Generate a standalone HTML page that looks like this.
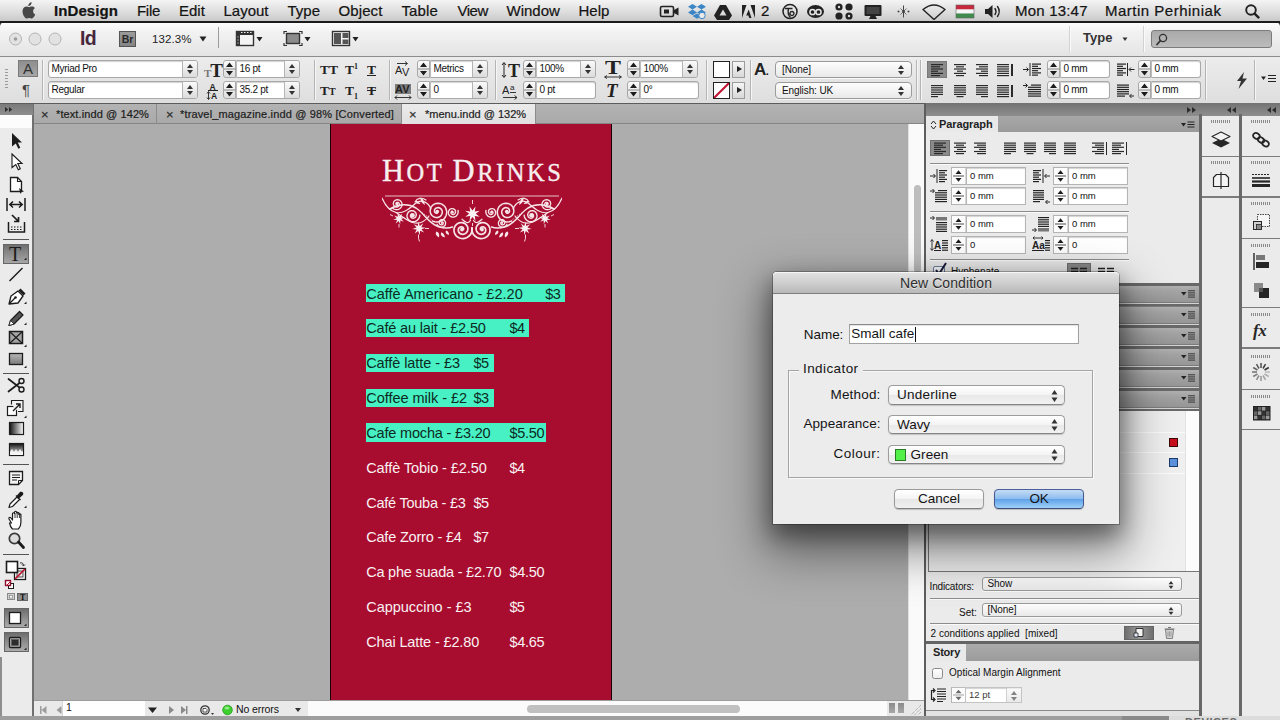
<!DOCTYPE html>
<html>
<head>
<meta charset="utf-8">
<title>InDesign</title>
<style>
*{box-sizing:border-box;margin:0;padding:0}
html,body{width:1280px;height:720px;overflow:hidden;background:#adadad;font-family:"Liberation Sans",sans-serif;color:#111}
.abs{position:absolute}
#root{position:absolute;left:0;top:0;width:1280px;height:720px;overflow:hidden}
/* ---------- menu bar ---------- */
#menubar{left:0;top:0;width:1280px;height:22px;background:linear-gradient(#f4f4f4,#dcdcdc 60%,#c9c9c9);border-bottom:2px solid #1c1c1c;height:22.500px;z-index:2}
#menubar span{position:absolute;top:2px;font-size:15px;line-height:18px;color:#141414;white-space:nowrap;-webkit-text-stroke:.22px #141414}
/* ---------- app bar ---------- */
#appbar{left:0;top:22px;width:1280px;height:35px;background:linear-gradient(#fdfdfd,#f2f2f2 30%,#e4e4e4);border-bottom:1px solid #8c8c8c;border-radius:5px 5px 0 0;box-shadow:0 -3px 0 3px #3c3c3c}
/* ---------- control panel ---------- */
#control{left:0;top:57px;width:1280px;height:47px;background:linear-gradient(#ececec,#dedede);border-bottom:1px solid #5c5c5c}
.fld{position:absolute;height:18px;background:#fff;border:1px solid #a8a8a8;border-radius:3px;font-size:10px;line-height:16.500px;padding-left:2.500px;letter-spacing:-.3px;color:#111;box-shadow:inset 0 1px 1px rgba(0,0,0,.18);white-space:nowrap;overflow:hidden}

.fld{position:absolute}
.fld.sq{border-radius:0 3px 3px 0;border-left-color:#bcbcbc}
.fld.pf{font-size:9.500px;letter-spacing:0;border-color:#b4b4b4;padding-left:3px;border-radius:0 !important}
.fld .dd{position:absolute;right:0;top:0;width:15px;height:16px;background:linear-gradient(#fafafa,#dcdcdc);border-left:1px solid #b4b4b4}
.fld .dd:before,.pop .ud:before{content:"";position:absolute;left:4px;top:3px;border:3px solid transparent;border-top:0;border-bottom:4px solid #333}
.fld .dd:after,.pop .ud:after{content:"";position:absolute;left:4px;top:9px;border:3px solid transparent;border-bottom:0;border-top:4px solid #333}
.vsep{top:3px;width:1px;height:40px;background:#b4b4b4;box-shadow:1px 0 0 #f6f6f6}
.tt{font-family:"Liberation Serif",serif;font-weight:bold;font-size:13.500px;line-height:18px;color:#222;white-space:nowrap}
.tt sup,.tt sub{font-size:8px;line-height:0}
.arrowbtn{width:13px;height:17px;background:linear-gradient(#f6f6f6,#d8d8d8);border:1px solid #9c9c9c}
.arrowbtn:before{content:"";position:absolute;left:4px;top:4px;border:3.500px solid transparent;border-right:0;border-left:5px solid #222}
.pop{position:absolute;height:17px;background:linear-gradient(#fdfdfd,#e9e9e9);border:1px solid #9a9a9a;border-radius:4px;font-size:10px;line-height:15px;padding-left:6px;letter-spacing:-.1px;color:#111;box-shadow:0 1px 0 rgba(255,255,255,.7);white-space:nowrap}
.pop .ud{position:absolute;right:3px;top:0;width:14px;height:16px}
/* ---------- tab bar ---------- */
#tabbar{left:33px;top:104px;width:891px;height:20px;background:linear-gradient(#b3b3b3,#a9a9a9);border-bottom:1px solid #858585}
.tab{position:absolute;top:0;height:20px;font-size:11px;line-height:21px;color:#1c1c1c;-webkit-text-stroke:.2px #1c1c1c;white-space:nowrap;border-right:1px solid #8c8c8c}
.tab span,.tab .x{position:absolute;top:0}
.tab .x{font-weight:normal;font-size:13px;color:#333}
.tab.act{background:linear-gradient(#ebebeb,#e0e0e0);height:20px}
/* ---------- canvas ---------- */
#canvas{left:33px;top:124px;width:875px;height:576px;background:#adadad}
#page{left:330px;top:123px;width:282px;height:578px;background:#a80c2f;border-left:1px solid #1a0006;border-right:1px solid #1a0006}
.row{position:absolute;font-size:14.5px;line-height:18px;color:#f9f1f2;white-space:pre}
.hl{position:absolute;height:18.300px;background:#48f1c4}
.row.dk{color:#0d2a22}
#vscroll{left:908px;top:124px;width:16px;height:576px;background:#fafafa;border-left:1px solid #e0e0e0}
#status{left:33px;top:700px;width:891px;height:16px;background:#e9e9e9;border-top:1px solid #9c9c9c}
/* ---------- tools ---------- */
#tools{left:0;top:104px;width:34px;height:616px;background:#ebebeb;border-right:2px solid #707070}
/* ---------- right panels ---------- */
#rightdock{left:924px;top:103px;width:356px;height:617px;background:#7f7f7f}
#dialog{left:773px;top:272px;width:346px;height:252px;background:#ececec;border-radius:4px 4px 0 0;box-shadow:0 22px 48px 8px rgba(0,0,0,.42),0 10px 22px 2px rgba(0,0,0,.38),0 0 0 1px rgba(0,0,0,.26)}
.dl{font-size:13.500px;line-height:16px;color:#141414;white-space:nowrap}
.dpop{position:absolute;width:177px;height:19.500px;border:1px solid #9c9c9c;border-bottom-color:#868686;border-radius:4.500px;background:linear-gradient(#ffffff,#f4f4f4 50%,#e8e8e8 51%,#f2f2f2);font-size:13.500px;line-height:17.500px;color:#141414;box-shadow:0 1px 1px rgba(0,0,0,.18)}
.dbtn{position:absolute;width:90px;height:20px;margin-top:-.5px;border:1px solid #9a9a9a;border-bottom-color:#808080;border-radius:4.500px;background:linear-gradient(#ffffff,#f4f4f4 50%,#e6e6e6 51%,#f0f0f0);font-size:13.500px;line-height:17.500px;text-align:center;color:#141414;box-shadow:0 1px 1px rgba(0,0,0,.2)}
.dbtn.ok{border-color:#4a5f9c #46598f #3a4b7c;background:linear-gradient(#c5dcf5,#8ebdf0 48%,#5fa2ea 52%,#9fd0f7)}
</style>
</head>
<body>
<div id="root">
<div id="canvas" class="abs"></div>
<div id="page" class="abs">
<div class="abs" style="left:51px;top:29.7px;width:190px;height:36px;font-family:'Liberation Serif',serif;color:#f7eef0;font-size:24.500px;line-height:36px;letter-spacing:2.550px;white-space:nowrap;-webkit-text-stroke:.35px #f7eef0"><span style="font-size:30.500px">H</span>OT <span style="font-size:30.500px">D</span>RINKS</div>
<svg class="abs" style="left:50.5px;top:71px" width="180" height="50" viewBox="-90 -2 180 50">
<path d="M-87 0H87" stroke="#e8bfc8" stroke-width="1.100"/>
<g><path d="M-0.2 31.9 L-0.1 34.2 L0.4 36.4 L1.4 38.4 L2.9 40.0 L4.6 41.3 L6.5 42.2 L8.6 42.6 L10.6 42.5 L12.6 42.0 L14.3 41.1 L15.8 39.8 L16.9 38.3 L17.7 36.6 L18.0 34.8 L18.0 33.0 L17.5 31.3 L16.7 29.7 L15.5 28.4 L14.2 27.5 L12.7 26.8 L11.1 26.5 L9.5 26.6 L8.1 27.1 L6.8 27.8 L5.7 28.8 L4.9 29.9 L4.3 31.2 L4.1 32.6 L4.2 33.9 L4.6 35.1 L5.2 36.2 L6.1 37.1 L7.1 37.8 L8.1 38.2 L9.2 38.3 L10.3 38.2 L11.3 37.9 L12.2 37.3 L12.9 36.6 L13.4 35.8 L13.6 35.0 L13.7 34.1 L13.6 33.3 L13.3 32.5 L12.9 31.9 L12.3 31.4 L11.7 31.0 L11.1 30.9 L10.4 30.8 L9.8 31.0 L9.3 31.2 L8.9 31.6 L8.6 32.0 L8.4 32.4 L8.4 32.8 L8.4 33.2" fill="none" stroke="#f6e6e9" stroke-width="1.7" stroke-linecap="round"/><path d="M39.6 25.1 L37.2 25.8 L34.7 26.0 L32.3 25.5 L30.1 24.5 L28.2 23.1 L26.8 21.3 L25.8 19.2 L25.3 17.0 L25.4 14.8 L26.0 12.7 L27.0 10.8 L28.5 9.3 L30.2 8.1 L32.1 7.4 L34.0 7.2 L36.0 7.5 L37.8 8.1 L39.3 9.2 L40.5 10.5 L41.4 12.1 L41.8 13.8 L41.8 15.5 L41.5 17.1 L40.8 18.6 L39.8 19.8 L38.5 20.7 L37.1 21.3 L35.7 21.6 L34.2 21.5 L32.9 21.0 L31.7 20.3 L30.8 19.4 L30.2 18.3 L29.8 17.1 L29.7 15.9 L29.9 14.7 L30.4 13.7 L31.1 12.9 L31.9 12.2 L32.8 11.8 L33.8 11.6 L34.7 11.7 L35.6 11.9 L36.3 12.4 L36.9 13.0 L37.3 13.6 L37.5 14.4 L37.5 15.1 L37.4 15.7 L37.1 16.3 L36.7 16.7 L36.2 17.0 L35.7 17.2 L35.3 17.2 L34.8 17.2 L34.5 17.0" fill="none" stroke="#f6e6e9" stroke-width="1.5" stroke-linecap="round"/><path d="M14.0 14.4 L13.8 15.6 L13.9 16.7 L14.2 17.8 L14.7 18.7 L15.4 19.6 L16.2 20.3 L17.1 20.7 L18.1 21.0 L19.1 21.1 L20.1 21.0 L21.0 20.7 L21.8 20.2 L22.5 19.6 L23.0 18.8 L23.4 18.0 L23.6 17.2 L23.6 16.3 L23.5 15.5 L23.2 14.7 L22.7 14.0 L22.2 13.4 L21.5 13.0 L20.8 12.7 L20.1 12.6 L19.3 12.6 L18.6 12.8 L18.0 13.1 L17.5 13.5 L17.0 14.0 L16.7 14.6 L16.5 15.2 L16.5 15.8 L16.5 16.4 L16.7 16.9 L17.0 17.4 L17.4 17.8 L17.8 18.1 L18.2 18.4 L18.7 18.5 L19.2 18.5 L19.6 18.4 L20.0 18.2 L20.4 18.0 L20.7 17.7 L20.9 17.3 L21.0 17.0 L21.0 16.6 L21.0 16.3 L20.9 16.0 L20.7 15.7 L20.5 15.5 L20.3 15.3 L20.1 15.2 L19.8 15.2 L19.6 15.2 L19.4 15.3" fill="none" stroke="#f6e6e9" stroke-width="1.35" stroke-linecap="round"/><path d="M34.9 28.3 L34.4 29.1 L33.8 29.8 L33.2 30.4 L32.4 30.9 L31.6 31.1 L30.7 31.2 L29.9 31.2 L29.1 31.0 L28.3 30.6 L27.7 30.1 L27.1 29.5 L26.7 28.9 L26.5 28.1 L26.4 27.4 L26.4 26.7 L26.6 26.0 L26.9 25.3 L27.3 24.8 L27.7 24.3 L28.3 23.9 L28.9 23.7 L29.5 23.6 L30.2 23.6 L30.8 23.7 L31.3 23.9 L31.8 24.3 L32.2 24.7 L32.5 25.1 L32.7 25.6 L32.8 26.1 L32.8 26.7 L32.7 27.1 L32.6 27.6 L32.3 28.0 L32.0 28.3 L31.6 28.6 L31.2 28.7 L30.8 28.8 L30.4 28.8 L30.0 28.8 L29.7 28.6 L29.4 28.4 L29.1 28.2 L28.9 27.9 L28.8 27.6 L28.8 27.3 L28.8 27.0 L28.8 26.7 L28.9 26.5 L29.1 26.3 L29.2 26.1 L29.4 26.0 L29.6 25.9 L29.8 25.9 L30.0 25.9 L30.2 26.0" fill="none" stroke="#f6e6e9" stroke-width="1.3" stroke-linecap="round"/><path d="M52.2 19.3 L52.4 20.7 L52.9 21.9 L53.6 23.1 L54.5 24.0 L55.6 24.8 L56.8 25.4 L58.0 25.7 L59.2 25.7 L60.4 25.6 L61.6 25.2 L62.6 24.6 L63.4 23.8 L64.1 22.9 L64.6 21.9 L64.9 20.9 L65.0 19.8 L64.9 18.8 L64.6 17.8 L64.1 16.9 L63.5 16.1 L62.8 15.5 L61.9 15.0 L61.0 14.8 L60.1 14.7 L59.2 14.7 L58.4 15.0 L57.7 15.4 L57.0 15.9 L56.5 16.5 L56.1 17.2 L55.8 17.9 L55.7 18.6 L55.8 19.3 L56.0 20.0 L56.3 20.6 L56.7 21.2 L57.2 21.6 L57.7 21.9 L58.3 22.1 L58.8 22.2 L59.4 22.1 L59.9 22.0 L60.4 21.8 L60.8 21.5 L61.1 21.1 L61.3 20.7 L61.5 20.3 L61.5 19.9 L61.5 19.5 L61.3 19.1 L61.2 18.8 L60.9 18.5 L60.7 18.3 L60.4 18.2 L60.1 18.2 L59.9 18.2" fill="none" stroke="#f6e6e9" stroke-width="1.4" stroke-linecap="round"/><path d="M79.2 12.2 L78.2 13.0 L77.0 13.4 L75.8 13.7 L74.6 13.6 L73.5 13.3 L72.4 12.8 L71.5 12.1 L70.8 11.2 L70.3 10.2 L70.0 9.1 L70.0 8.1 L70.2 7.0 L70.6 6.1 L71.2 5.2 L71.9 4.5 L72.8 4.0 L73.7 3.8 L74.6 3.7 L75.5 3.8 L76.4 4.1 L77.1 4.5 L77.8 5.1 L78.2 5.8 L78.5 6.6 L78.7 7.4 L78.6 8.2 L78.4 8.9 L78.1 9.6 L77.6 10.1 L77.0 10.6 L76.4 10.8 L75.8 11.0 L75.1 11.0 L74.5 10.9 L73.9 10.6 L73.5 10.2 L73.1 9.8 L72.8 9.3 L72.7 8.8 L72.7 8.3 L72.7 7.8 L72.9 7.3 L73.2 7.0 L73.5 6.7 L73.9 6.4 L74.3 6.3 L74.7 6.3 L75.0 6.4 L75.4 6.5 L75.6 6.7 L75.8 6.9 L76.0 7.2 L76.0 7.5 L76.0 7.7 L76.0 7.9 L75.9 8.1" fill="none" stroke="#f6e6e9" stroke-width="1.3" stroke-linecap="round"/><path d="M90 2 C87 9 82 15 76 16.500 C68 18 62 12 56 7 C50 3 44 6 41 13" fill="none" stroke="#f6e6e9" stroke-width="1.2" stroke-linecap="round"/><path d="M82 13 C74 8 64 7 56 12 C47 18 44 27 34 30.500 C28 32.500 22 32 19.500 31" fill="none" stroke="#f6e6e9" stroke-width="1.5" stroke-linecap="round"/><path d="M76 16.500 C70 20 64 26 57 27 C50 28 46 24 43 20" fill="none" stroke="#f6e6e9" stroke-width="1.2" stroke-linecap="round"/><path d="M1.500 24.500 C4 29 8 25 10 23.200" fill="none" stroke="#f6e6e9" stroke-width="1.2" stroke-linecap="round"/><path d="M46 4 C50 1 55 2 57 6" fill="none" stroke="#f6e6e9" stroke-width="1.1" stroke-linecap="round"/><path d="M47 9 q1.500-7 4.500-7.500 q.5 5-4.500 7.500z M51.500 8 q3-4 5.500-3 q-1 3.500-5.500 3z M27 41.500 q1-5 4-5 q1 4-4 5z M33 41.500 q-1-5 2.500-6 q2.500 3-2.500 6z M23 39 q0-4 3-4.500 q1.500 3-3 4.500z" fill="#f6e6e9"/><path d="M78.7 23.8 L74.9 23.9 L76.2 27.4 L73.4 24.9 L71.8 28.3 L71.7 24.5 L68.2 25.8 L70.7 23.0 L67.3 21.4 L71.1 21.3 L69.8 17.8 L72.6 20.3 L74.2 16.9 L74.3 20.7 L77.8 19.4 L75.3 22.2z" fill="#f9eef0"/><path d="M59.6 33.1 L55.3 33.6 L57.2 37.5 L53.8 34.9 L52.3 39.0 L51.8 34.7 L47.9 36.6 L50.5 33.2 L46.4 31.7 L50.7 31.2 L48.8 27.3 L52.2 29.9 L53.7 25.8 L54.2 30.1 L58.1 28.2 L55.5 31.6z" fill="#f9eef0"/><path d="M53.500 38.500q.5 4-1 7M73 28v3.500M47 32.500h-4M79 20l3-1.500" stroke="#f6e6e9" stroke-width=".9" fill="none"/><circle cx="34.700" cy="15.500" r="1.800" fill="#f6e6e9"/><circle cx="19.400" cy="16.200" r="1.200" fill="#f6e6e9"/><circle cx="10" cy="33.500" r="1.900" fill="#f6e6e9"/><circle cx="59.500" cy="19.300" r="2.300" fill="#f6e6e9"/><circle cx="75" cy="8" r="1.300" fill="#f6e6e9"/><circle cx="30.200" cy="26.800" r="1.100" fill="#f6e6e9"/><path d="M40 24l12-9" stroke="#f6e6e9" stroke-width="1" stroke-dasharray=".1 2.200" stroke-linecap="round"/></g><g transform="scale(-1,1)"><path d="M-0.2 31.9 L-0.1 34.2 L0.4 36.4 L1.4 38.4 L2.9 40.0 L4.6 41.3 L6.5 42.2 L8.6 42.6 L10.6 42.5 L12.6 42.0 L14.3 41.1 L15.8 39.8 L16.9 38.3 L17.7 36.6 L18.0 34.8 L18.0 33.0 L17.5 31.3 L16.7 29.7 L15.5 28.4 L14.2 27.5 L12.7 26.8 L11.1 26.5 L9.5 26.6 L8.1 27.1 L6.8 27.8 L5.7 28.8 L4.9 29.9 L4.3 31.2 L4.1 32.6 L4.2 33.9 L4.6 35.1 L5.2 36.2 L6.1 37.1 L7.1 37.8 L8.1 38.2 L9.2 38.3 L10.3 38.2 L11.3 37.9 L12.2 37.3 L12.9 36.6 L13.4 35.8 L13.6 35.0 L13.7 34.1 L13.6 33.3 L13.3 32.5 L12.9 31.9 L12.3 31.4 L11.7 31.0 L11.1 30.9 L10.4 30.8 L9.8 31.0 L9.3 31.2 L8.9 31.6 L8.6 32.0 L8.4 32.4 L8.4 32.8 L8.4 33.2" fill="none" stroke="#f6e6e9" stroke-width="1.7" stroke-linecap="round"/><path d="M39.6 25.1 L37.2 25.8 L34.7 26.0 L32.3 25.5 L30.1 24.5 L28.2 23.1 L26.8 21.3 L25.8 19.2 L25.3 17.0 L25.4 14.8 L26.0 12.7 L27.0 10.8 L28.5 9.3 L30.2 8.1 L32.1 7.4 L34.0 7.2 L36.0 7.5 L37.8 8.1 L39.3 9.2 L40.5 10.5 L41.4 12.1 L41.8 13.8 L41.8 15.5 L41.5 17.1 L40.8 18.6 L39.8 19.8 L38.5 20.7 L37.1 21.3 L35.7 21.6 L34.2 21.5 L32.9 21.0 L31.7 20.3 L30.8 19.4 L30.2 18.3 L29.8 17.1 L29.7 15.9 L29.9 14.7 L30.4 13.7 L31.1 12.9 L31.9 12.2 L32.8 11.8 L33.8 11.6 L34.7 11.7 L35.6 11.9 L36.3 12.4 L36.9 13.0 L37.3 13.6 L37.5 14.4 L37.5 15.1 L37.4 15.7 L37.1 16.3 L36.7 16.7 L36.2 17.0 L35.7 17.2 L35.3 17.2 L34.8 17.2 L34.5 17.0" fill="none" stroke="#f6e6e9" stroke-width="1.5" stroke-linecap="round"/><path d="M14.0 14.4 L13.8 15.6 L13.9 16.7 L14.2 17.8 L14.7 18.7 L15.4 19.6 L16.2 20.3 L17.1 20.7 L18.1 21.0 L19.1 21.1 L20.1 21.0 L21.0 20.7 L21.8 20.2 L22.5 19.6 L23.0 18.8 L23.4 18.0 L23.6 17.2 L23.6 16.3 L23.5 15.5 L23.2 14.7 L22.7 14.0 L22.2 13.4 L21.5 13.0 L20.8 12.7 L20.1 12.6 L19.3 12.6 L18.6 12.8 L18.0 13.1 L17.5 13.5 L17.0 14.0 L16.7 14.6 L16.5 15.2 L16.5 15.8 L16.5 16.4 L16.7 16.9 L17.0 17.4 L17.4 17.8 L17.8 18.1 L18.2 18.4 L18.7 18.5 L19.2 18.5 L19.6 18.4 L20.0 18.2 L20.4 18.0 L20.7 17.7 L20.9 17.3 L21.0 17.0 L21.0 16.6 L21.0 16.3 L20.9 16.0 L20.7 15.7 L20.5 15.5 L20.3 15.3 L20.1 15.2 L19.8 15.2 L19.6 15.2 L19.4 15.3" fill="none" stroke="#f6e6e9" stroke-width="1.35" stroke-linecap="round"/><path d="M34.9 28.3 L34.4 29.1 L33.8 29.8 L33.2 30.4 L32.4 30.9 L31.6 31.1 L30.7 31.2 L29.9 31.2 L29.1 31.0 L28.3 30.6 L27.7 30.1 L27.1 29.5 L26.7 28.9 L26.5 28.1 L26.4 27.4 L26.4 26.7 L26.6 26.0 L26.9 25.3 L27.3 24.8 L27.7 24.3 L28.3 23.9 L28.9 23.7 L29.5 23.6 L30.2 23.6 L30.8 23.7 L31.3 23.9 L31.8 24.3 L32.2 24.7 L32.5 25.1 L32.7 25.6 L32.8 26.1 L32.8 26.7 L32.7 27.1 L32.6 27.6 L32.3 28.0 L32.0 28.3 L31.6 28.6 L31.2 28.7 L30.8 28.8 L30.4 28.8 L30.0 28.8 L29.7 28.6 L29.4 28.4 L29.1 28.2 L28.9 27.9 L28.8 27.6 L28.8 27.3 L28.8 27.0 L28.8 26.7 L28.9 26.5 L29.1 26.3 L29.2 26.1 L29.4 26.0 L29.6 25.9 L29.8 25.9 L30.0 25.9 L30.2 26.0" fill="none" stroke="#f6e6e9" stroke-width="1.3" stroke-linecap="round"/><path d="M52.2 19.3 L52.4 20.7 L52.9 21.9 L53.6 23.1 L54.5 24.0 L55.6 24.8 L56.8 25.4 L58.0 25.7 L59.2 25.7 L60.4 25.6 L61.6 25.2 L62.6 24.6 L63.4 23.8 L64.1 22.9 L64.6 21.9 L64.9 20.9 L65.0 19.8 L64.9 18.8 L64.6 17.8 L64.1 16.9 L63.5 16.1 L62.8 15.5 L61.9 15.0 L61.0 14.8 L60.1 14.7 L59.2 14.7 L58.4 15.0 L57.7 15.4 L57.0 15.9 L56.5 16.5 L56.1 17.2 L55.8 17.9 L55.7 18.6 L55.8 19.3 L56.0 20.0 L56.3 20.6 L56.7 21.2 L57.2 21.6 L57.7 21.9 L58.3 22.1 L58.8 22.2 L59.4 22.1 L59.9 22.0 L60.4 21.8 L60.8 21.5 L61.1 21.1 L61.3 20.7 L61.5 20.3 L61.5 19.9 L61.5 19.5 L61.3 19.1 L61.2 18.8 L60.9 18.5 L60.7 18.3 L60.4 18.2 L60.1 18.2 L59.9 18.2" fill="none" stroke="#f6e6e9" stroke-width="1.4" stroke-linecap="round"/><path d="M79.2 12.2 L78.2 13.0 L77.0 13.4 L75.8 13.7 L74.6 13.6 L73.5 13.3 L72.4 12.8 L71.5 12.1 L70.8 11.2 L70.3 10.2 L70.0 9.1 L70.0 8.1 L70.2 7.0 L70.6 6.1 L71.2 5.2 L71.9 4.5 L72.8 4.0 L73.7 3.8 L74.6 3.7 L75.5 3.8 L76.4 4.1 L77.1 4.5 L77.8 5.1 L78.2 5.8 L78.5 6.6 L78.7 7.4 L78.6 8.2 L78.4 8.9 L78.1 9.6 L77.6 10.1 L77.0 10.6 L76.4 10.8 L75.8 11.0 L75.1 11.0 L74.5 10.9 L73.9 10.6 L73.5 10.2 L73.1 9.8 L72.8 9.3 L72.7 8.8 L72.7 8.3 L72.7 7.8 L72.9 7.3 L73.2 7.0 L73.5 6.7 L73.9 6.4 L74.3 6.3 L74.7 6.3 L75.0 6.4 L75.4 6.5 L75.6 6.7 L75.8 6.9 L76.0 7.2 L76.0 7.5 L76.0 7.7 L76.0 7.9 L75.9 8.1" fill="none" stroke="#f6e6e9" stroke-width="1.3" stroke-linecap="round"/><path d="M90 2 C87 9 82 15 76 16.500 C68 18 62 12 56 7 C50 3 44 6 41 13" fill="none" stroke="#f6e6e9" stroke-width="1.2" stroke-linecap="round"/><path d="M82 13 C74 8 64 7 56 12 C47 18 44 27 34 30.500 C28 32.500 22 32 19.500 31" fill="none" stroke="#f6e6e9" stroke-width="1.5" stroke-linecap="round"/><path d="M76 16.500 C70 20 64 26 57 27 C50 28 46 24 43 20" fill="none" stroke="#f6e6e9" stroke-width="1.2" stroke-linecap="round"/><path d="M1.500 24.500 C4 29 8 25 10 23.200" fill="none" stroke="#f6e6e9" stroke-width="1.2" stroke-linecap="round"/><path d="M46 4 C50 1 55 2 57 6" fill="none" stroke="#f6e6e9" stroke-width="1.1" stroke-linecap="round"/><path d="M47 9 q1.500-7 4.500-7.500 q.5 5-4.500 7.500z M51.500 8 q3-4 5.500-3 q-1 3.500-5.500 3z M27 41.500 q1-5 4-5 q1 4-4 5z M33 41.500 q-1-5 2.500-6 q2.500 3-2.500 6z M23 39 q0-4 3-4.500 q1.500 3-3 4.500z" fill="#f6e6e9"/><path d="M78.7 23.8 L74.9 23.9 L76.2 27.4 L73.4 24.9 L71.8 28.3 L71.7 24.5 L68.2 25.8 L70.7 23.0 L67.3 21.4 L71.1 21.3 L69.8 17.8 L72.6 20.3 L74.2 16.9 L74.3 20.7 L77.8 19.4 L75.3 22.2z" fill="#f9eef0"/><path d="M59.6 33.1 L55.3 33.6 L57.2 37.5 L53.8 34.9 L52.3 39.0 L51.8 34.7 L47.9 36.6 L50.5 33.2 L46.4 31.7 L50.7 31.2 L48.8 27.3 L52.2 29.9 L53.7 25.8 L54.2 30.1 L58.1 28.2 L55.5 31.6z" fill="#f9eef0"/><path d="M53.500 38.500q.5 4-1 7M73 28v3.500M47 32.500h-4M79 20l3-1.500" stroke="#f6e6e9" stroke-width=".9" fill="none"/><circle cx="34.700" cy="15.500" r="1.800" fill="#f6e6e9"/><circle cx="19.400" cy="16.200" r="1.200" fill="#f6e6e9"/><circle cx="10" cy="33.500" r="1.900" fill="#f6e6e9"/><circle cx="59.500" cy="19.300" r="2.300" fill="#f6e6e9"/><circle cx="75" cy="8" r="1.300" fill="#f6e6e9"/><circle cx="30.200" cy="26.800" r="1.100" fill="#f6e6e9"/><path d="M40 24l12-9" stroke="#f6e6e9" stroke-width="1" stroke-dasharray=".1 2.200" stroke-linecap="round"/></g>
<path d="M7.7 20.8 L2.8 20.1 L3.5 25.0 L0.5 21.1 L-2.5 25.0 L-1.8 20.1 L-6.7 20.8 L-2.8 17.8 L-6.7 14.8 L-1.8 15.5 L-2.5 10.6 L0.5 14.5 L3.5 10.6 L2.8 15.5 L7.7 14.8 L3.8 17.8z" fill="#fbf2f4"/><path d="M.5 8v-4M.5 27v3" stroke="#f6e6e9" stroke-width=".9"/>
</svg>
<div class="hl" style="top:161.10000000000002px;left:34.7px;width:199.3px"></div>
<span class="row dk" style="top:161.6px;left:35.2px;letter-spacing:0.02px">Caffè Americano - £2.20</span><span class="row dk" style="top:161.6px;left:214.3px;letter-spacing:-0.56px">$3</span>
<div class="hl" style="top:195.89999999999998px;left:34.7px;width:163.6px"></div>
<span class="row dk" style="top:196.4px;left:35.2px;letter-spacing:-0.15px">Café au lait - £2.50</span><span class="row dk" style="top:196.4px;left:178.4px;letter-spacing:-0.56px">$4</span>
<div class="hl" style="top:230.8px;left:34.7px;width:128.1px"></div>
<span class="row dk" style="top:231.3px;left:35.2px;letter-spacing:-0.07px">Caffè latte - £3</span><span class="row dk" style="top:231.3px;left:142.6px;letter-spacing:-0.76px">$5</span>
<div class="hl" style="top:265.6px;left:34.7px;width:128.1px"></div>
<span class="row dk" style="top:266.1px;left:35.2px;letter-spacing:-0.02px">Coffee milk - £2</span><span class="row dk" style="top:266.1px;left:142.6px;letter-spacing:-0.76px">$3</span>
<div class="hl" style="top:300.4px;left:34.7px;width:179.9px"></div>
<span class="row dk" style="top:300.9px;left:35.2px;letter-spacing:-0.17px">Cafe mocha - £3.20</span><span class="row dk" style="top:300.9px;left:178.4px;letter-spacing:-0.3px">$5.50</span>
<span class="row" style="top:335.7px;left:35.2px;letter-spacing:-0.08px">Caffè Tobio - £2.50</span><span class="row" style="top:335.7px;left:178.4px;letter-spacing:-0.56px">$4</span>
<span class="row" style="top:370.6px;left:35.2px;letter-spacing:-0.23px">Café Touba - £3</span><span class="row" style="top:370.6px;left:142.6px;letter-spacing:-0.76px">$5</span>
<span class="row" style="top:405.4px;left:35.2px;letter-spacing:-0.19px">Cafe Zorro - £4</span><span class="row" style="top:405.4px;left:142.6px;letter-spacing:-0.76px">$7</span>
<span class="row" style="top:440.2px;left:35.2px;letter-spacing:-0.22px">Ca phe suada - £2.70</span><span class="row" style="top:440.2px;left:178.4px;letter-spacing:-0.3px">$4.50</span>
<span class="row" style="top:475.1px;left:35.2px;letter-spacing:-0.01px">Cappuccino - £3</span><span class="row" style="top:475.1px;left:178.4px;letter-spacing:-0.76px">$5</span>
<span class="row" style="top:509.9px;left:35.2px;letter-spacing:-0.13px">Chai Latte - £2.80</span><span class="row" style="top:509.9px;left:178.4px;letter-spacing:-0.3px">$4.65</span>
</div>
<div id="vscroll" class="abs"><div class="abs" style="left:5px;top:61px;width:7px;height:88px;border-radius:4px;background:#bdbdbd"></div></div>
<div id="status" class="abs">
<svg class="abs" style="left:4px;top:3px" width="270" height="12" viewBox="0 0 270 12">
<g fill="#9c9c9c"><path d="M3 2h1.500v8H3zM9.500 2v8L4.500 6z"/><path d="M24.500 2v8L19.500 6z"/></g>
<path d="M111 3.500h9L115.500 9z" fill="#222"/>
<g fill="#8a8a8a"><path d="M132 2v8l5-4z"/><path d="M144 2v8l5-4zM149 2h1.500v8H149z"/></g>
<circle cx="168" cy="6" r="4.200" fill="#e8e8e8" stroke="#333" stroke-width="1.300"/><path d="M166 4.500h3l1 1v2.500h-4z" fill="#fff" stroke="#333" stroke-width=".8"/><path d="M174 9h3l-1.500 2z" fill="#333"/>
<circle cx="190.500" cy="6" r="4.800" fill="#3ccf2e" stroke="#2a9a20" stroke-width=".8"/><ellipse cx="190" cy="4" rx="2.500" ry="1.500" fill="#a6f09c" opacity=".8"/>
<path d="M258 4h6l-3 4z" fill="#333"/>
</svg>
<div class="abs" style="left:29px;top:0;width:83px;height:15px;background:#fff;border:0;border-left:1px solid #d8d8d8;line-height:15.500px;font-size:10.500px;line-height:12px;padding-left:3px">1</div>
<span class="abs" style="left:203px;top:1px;font-size:10.500px;line-height:14px;color:#111;letter-spacing:-.1px">No errors</span>
<div class="abs" style="left:275px;top:0;width:579px;height:16px;background:#fbfbfb"></div>
<div class="abs" style="left:494px;top:4px;width:213px;height:8px;border-radius:4px;background:#c0c0c0"></div>
<div class="abs" style="left:856px;top:2px;width:6px;height:10px;background:linear-gradient(#8a8a8a,#a8a8a8)"></div><div class="abs" style="left:865px;top:2px;width:6px;height:10px;background:linear-gradient(#8a8a8a,#a8a8a8)"></div>
<svg class="abs" style="left:877px;top:3px" width="12" height="12" viewBox="0 0 12 12"><path d="M11 1L1 11M11 4.500L4.500 11M11 8L8 11" stroke="#9a9a9a" stroke-width="1" stroke-dasharray="1 1"/></svg>
</div>

<div id="menubar" class="abs">
<svg class="abs" style="left:20px;top:2px" width="17" height="18" viewBox="0 0 17 18"><path d="M11.6 0.3c.1 1-.3 1.9-.9 2.6-.6.7-1.5 1.200-2.400 1.100-.1-.9.400-1.900.900-2.500.6-.700 1.600-1.200 2.400-1.200zM14.800 6.300c-.1.100-1.700 1-1.700 3 0 2.300 2 3.100 2.100 3.100 0 .100-.300 1.100-1.100 2.200-.600.900-1.300 1.900-2.400 1.900-1 0-1.300-.600-2.500-.600-1.200 0-1.500.600-2.500.700-1 0-1.800-1-2.500-2-1.400-2-2.400-5.600-1-8 .700-1.200 1.900-2 3.300-2 1 0 2 .700 2.600.700.600 0 1.800-.900 3.100-.700.500 0 2 .200 2.600 1.700z" fill="#484848"/></svg>
<span style="left:54px;font-weight:bold;letter-spacing:.08px">InDesign</span>
<span style="left:137px;letter-spacing:-.3px">File</span>
<span style="left:179px">Edit</span>
<span style="left:223.500px">Layout</span>
<span style="left:287.500px">Type</span>
<span style="left:338.500px;letter-spacing:.1px">Object</span>
<span style="left:401.500px;letter-spacing:.1px">Table</span>
<span style="left:457.500px;letter-spacing:-.5px">View</span>
<span style="left:506.500px">Window</span>
<span style="left:578.500px">Help</span>
<!-- status icons -->
<svg class="abs" style="left:658px;top:3px" width="350" height="17" viewBox="0 0 350 17">
 <!-- camera -->
 <rect x="2.500" y="3.500" width="13" height="10" rx="1.500" fill="none" stroke="#222" stroke-width="1.600"/><path d="M16 7l4.500-2.500v8L16 10z" fill="#222"/><rect x="6" y="6.500" width="5" height="4" fill="#222"/>
 <!-- dropbox -->
 <g fill="#3d86c6"><path d="M34.500 1l4.500 2.800-4.500 2.800-4.500-2.800zM43.500 1l4.500 2.800-4.500 2.800-4.500-2.800zM30 9.400l4.500-2.800 4.500 2.800-4.500 2.800zM43.500 6.600l4.500 2.800-4.500 2.800-4.500-2.800zM34.600 13.100l4.400-2.700 4.400 2.700-4.400 2.700z"/></g>
 <circle cx="44" cy="12.500" r="3.200" fill="#e9e9e9" stroke="#3d86c6" stroke-width="1"/>
 <!-- drive -->
 <path d="M62 2h6l6 10.500-3 4.500H59l-3-4.500zM65 6.500l-3.500 6h7z" fill="#222" fill-rule="evenodd"/>
 <!-- adobe A| 2 -->
 <path d="M84 15V2h4.500zM97 15V2h-4.500zM90.700 6.500l2.800 8.500h-2.300l-.8-2.500h-2.200z" fill="#222"/>
 <!-- swirl -->
 <circle cx="132" cy="8.500" r="7" fill="none" stroke="#222" stroke-width="1.500"/><path d="M127 5.500h7.500M130.500 5.500c-1 4 0 7 2 9M134 8.500a2 2 0 1 1-.1 0" fill="none" stroke="#222" stroke-width="1.400"/>
 <!-- CC -->
 <ellipse cx="157.500" cy="8.500" rx="8.500" ry="6.500" fill="#222"/><circle cx="154.500" cy="9" r="2.600" fill="none" stroke="#e6e6e6" stroke-width="1.500"/><circle cx="160.500" cy="9" r="2.600" fill="none" stroke="#e6e6e6" stroke-width="1.500"/>
 <!-- four dots -->
 <circle cx="181" cy="4" r="3.600" fill="#222"/><circle cx="191" cy="4" r="3.600" fill="#222"/><circle cx="181" cy="13" r="3.600" fill="#222"/><circle cx="191" cy="13" r="3.600" fill="#222"/><circle cx="181" cy="4" r="1.200" fill="#ddd"/><circle cx="191" cy="13" r="1.200" fill="#ddd"/>
 <!-- monitor -->
 <rect x="206.500" y="2" width="17" height="11" rx="1" fill="#222"/><rect x="208.500" y="4" width="13" height="7" fill="#444"/><path d="M211 16h8l-1.500-3h-5z" fill="#222"/>
 <!-- sparkle -->
 <path d="M245.500 2.500v12" stroke="#444" stroke-width="1"/><path d="M242.500 5.500l6 6M248.500 5.500l-6 6" stroke="#555" stroke-width=".8"/><circle cx="240.500" cy="8.500" r="1" fill="#444"/><circle cx="250.500" cy="8.500" r="1" fill="#444"/><circle cx="245.500" cy="8.500" r="1.400" fill="#444"/>
 <!-- wifi diamond -->
 <path d="M265 6.500Q276 -2.500 287 6.500L276 16.500z" fill="none" stroke="#222" stroke-width="1.400" stroke-linejoin="round"/>
 <!-- flag -->
 <rect x="298" y="2" width="18" height="4.500" fill="#c8283c"/><rect x="298" y="6.500" width="18" height="4" fill="#f6f6f6"/><rect x="298" y="10.500" width="18" height="4.500" fill="#3f8a4d"/><rect x="298" y="2" width="18" height="13" fill="none" stroke="#666" stroke-width=".6"/>
 <!-- volume -->
 <path d="M327 6h3l4.500-4v13L330 11h-3z" fill="#222"/><path d="M337 5.500q2 3 0 6M339.500 3.500q3.500 5 0 10" fill="none" stroke="#222" stroke-width="1.400" stroke-linecap="round"/>
</svg>
<span style="left:761px;top:2px;font-size:15px">2</span>
<span style="left:1015px;letter-spacing:.2px">Mon 13:47</span>
<span style="left:1105px;letter-spacing:.5px">Martin Perhiniak</span>
<svg class="abs" style="left:1244px;top:2.500px" width="17" height="16" viewBox="0 0 17 16"><circle cx="7" cy="7" r="4.800" fill="none" stroke="#222" stroke-width="1.900"/><path d="M10.600 10.600l3.800 3.800" stroke="#222" stroke-width="2.500" stroke-linecap="round"/></svg>
</div>
<div id="appbar" class="abs">
<svg class="abs" style="left:6px;top:8px" width="60" height="18" viewBox="0 0 60 18">
 <g fill="#e2e2e2" stroke="#b4b4b4" stroke-width="1"><circle cx="9.500" cy="9" r="6"/><circle cx="29" cy="9" r="6"/><circle cx="49" cy="9" r="6"/></g><circle cx="9.500" cy="9" r="1.800" fill="#9c9c9c"/>
</svg>
<span class="abs" style="left:79px;top:3px;font-size:19.500px;line-height:26px;font-weight:bold;color:#47273b;letter-spacing:-.6px;top:2.500px;left:80px">Id</span>
<div class="abs" style="left:119px;top:9px;width:17px;height:16px;background:linear-gradient(#9a9a9a,#858585);border:1px solid #555;font-size:10.500px;font-weight:bold;line-height:14px;text-align:center;color:#2a2a2a">Br</div>
<span class="abs" style="left:152px;top:9px;font-size:11.500px;letter-spacing:.1px;line-height:16px;color:#222">132.3%</span>
<svg class="abs" style="left:198.500px;top:14px" width="9" height="6"><path d="M.5.5h7L4 5.500z" fill="#222"/></svg>
<div class="abs" style="left:218px;top:5px;width:1px;height:21px;background:#9c9c9c"></div>
<svg class="abs" style="left:234px;top:7px" width="130" height="20" viewBox="0 0 130 20">
 <!-- view options -->
 <rect x="2.500" y="2.500" width="17" height="14" fill="#f4f4f4" stroke="#333" stroke-width="1.400"/><rect x="2" y="2" width="18" height="4" fill="#333"/><rect x="2" y="2" width="4" height="15" fill="#333"/><path d="M7 3.500h1.500M10 3.500h1.500M13 3.500h1.500M16 3.500h1.500M3.500 8h1M3.500 11h1M3.500 14h1" stroke="#eee" stroke-width="1"/>
 <path d="M22.500 8h6l-3 4.500z" fill="#222"/>
 <!-- screen mode -->
 <rect x="52.500" y="4.500" width="13" height="10" fill="#8c8c8c" stroke="#333" stroke-width="1.400"/><path d="M50 5V2.500h3M68 5V2.500h-3M50 14v2.500h3M68 14v2.500h-3" fill="none" stroke="#333" stroke-width="1.200"/>
 <path d="M70.500 8h6l-3 4.500z" fill="#222"/>
 <!-- arrange -->
 <rect x="98.500" y="2.500" width="17" height="14" fill="#f4f4f4" stroke="#333" stroke-width="1.400"/><rect x="100" y="4" width="7" height="11" fill="#555"/><rect x="108.500" y="4" width="6" height="5" fill="#555"/><rect x="108.500" y="10.500" width="6" height="4.500" fill="#555"/>
 <path d="M118.500 8h6l-3 4.500z" fill="#222"/>
</svg>
<div class="abs" style="left:1069px;top:4px;width:1px;height:26px;background:#d2d2d2;box-shadow:1px 0 0 #fafafa"></div><div class="abs" style="left:1143px;top:4px;width:1px;height:26px;background:#d2d2d2;box-shadow:1px 0 0 #fafafa"></div><span class="abs" style="left:1083px;top:8px;font-size:13px;line-height:16px;font-weight:bold;color:#333">Type</span>
<svg class="abs" style="left:1122px;top:15px" width="7" height="5"><path d="M.5.5h5L3 4z" fill="#333"/></svg>
<div class="abs" style="left:1151px;top:8px;width:121px;height:18px;background:linear-gradient(#a9a9a9,#bcbcbc);border:1px solid #7c7c7c;border-radius:3px"></div>
<svg class="abs" style="left:1155px;top:11px" width="14" height="13" viewBox="0 0 14 13"><circle cx="8" cy="5" r="3.600" fill="none" stroke="#333" stroke-width="1.300"/><path d="M5.500 7.500L2 11.500" stroke="#333" stroke-width="1.800" stroke-linecap="round"/></svg>
</div>
<div id="control" class="abs">
<div class="abs" style="left:5px;top:12px;width:3px;height:21px;background:repeating-linear-gradient(#9a9a9a 0 1px,transparent 1px 3px)"></div>
<div class="abs" style="left:18px;top:3px;width:20px;height:17px;background:linear-gradient(#8e8e8e,#a6a6a6);border:1px solid #7a7a7a;font-size:15px;line-height:15px;text-align:center;color:#333">A</div>
<span class="abs" style="left:22px;top:25px;font-size:15px;line-height:16px;color:#444">&para;</span>
<div class="abs vsep" style="left:42px"></div>
<div class="fld" style="left:48px;top:3px;width:150px">Myriad Pro<i class="dd"></i></div>
<div class="fld" style="left:48px;top:24px;width:150px">Regular<i class="dd"></i></div>
<span class="abs" style="left:204px;top:5px;font-family:'Liberation Serif',serif;font-weight:bold;color:#222;font-size:11px;line-height:18px;letter-spacing:-1px"><span style="color:#777">T</span><span style="font-size:19px">T</span></span>
<svg class="abs" style="left:206px;top:25px" width="14" height="18" viewBox="0 0 14 18"><text x="3.500" y="7.500" font-family="Liberation Sans" font-size="8.500" font-weight="bold" fill="#222">A</text><path d="M2 8.500h10" stroke="#222"/><text x="5" y="17" font-family="Liberation Sans" font-size="8.500" font-weight="bold" fill="#222">A</text><path d="M2.500 10v7M1 11.500l1.500-2 1.500 2M1 15.500l1.500 2 1.500-2" stroke="#222" fill="none" stroke-width=".9"/></svg>
<svg class="abs" style="left:223px;top:3px" width="13" height="18" viewBox="0 0 13 18"><defs><linearGradient id="spg" x1="0" y1="0" x2="0" y2="1"><stop offset="0" stop-color="#fdfdfd"/><stop offset="1" stop-color="#dcdcdc"/></linearGradient></defs><path d="M3 .5H12.500V17.500H3A2.500 2.500 0 0 1 .5 15V3A2.500 2.500 0 0 1 3 .5z" fill="url(#spg)" stroke="#a8a8a8"/><path d="M1 9h11.500" stroke="#8a8a8a"/><path d="M6.500 2.500l3.500 4.500h-7zM6.500 15.500l3.500-4.500h-7z" fill="#1c1c1c"/></svg>
<svg class="abs" style="left:223px;top:24px" width="13" height="18" viewBox="0 0 13 18"><defs><linearGradient id="spg" x1="0" y1="0" x2="0" y2="1"><stop offset="0" stop-color="#fdfdfd"/><stop offset="1" stop-color="#dcdcdc"/></linearGradient></defs><path d="M3 .5H12.500V17.500H3A2.500 2.500 0 0 1 .5 15V3A2.500 2.500 0 0 1 3 .5z" fill="url(#spg)" stroke="#a8a8a8"/><path d="M1 9h11.500" stroke="#8a8a8a"/><path d="M6.500 2.500l3.500 4.500h-7zM6.500 15.500l3.500-4.500h-7z" fill="#1c1c1c"/></svg>
<div class="fld sq" style="left:236px;top:3px;width:64px">16 pt<i class="dd"></i></div>
<div class="fld sq" style="left:236px;top:24px;width:64px">35.2 pt<i class="dd"></i></div>
<div class="abs vsep" style="left:314px"></div>
<span class="abs tt" style="left:320px;top:4px">TT</span>
<span class="abs tt" style="left:345px;top:4px">T<sup>1</sup></span>
<span class="abs tt" style="left:367px;top:4px"><u>T</u></span>
<span class="abs tt" style="left:320px;top:25px">T<span style="font-size:10px">T</span></span>
<span class="abs tt" style="left:345px;top:25px">T<sub>1</sub></span>
<span class="abs tt" style="left:367px;top:25px"><s>T</s></span>
<div class="abs vsep" style="left:389px"></div>
<svg class="abs" style="left:394px;top:4px" width="18" height="18" viewBox="0 0 18 18"><text x="1" y="13" font-family="Liberation Sans" font-size="11" fill="#222">A</text><text x="8" y="15" font-family="Liberation Sans" font-size="11" fill="#222">V</text><path d="M3 2.500h10M11 .5l2.500 2-2.500 2" stroke="#222" fill="none" stroke-width=".9"/></svg>
<svg class="abs" style="left:394px;top:25px" width="18" height="18" viewBox="0 0 18 18"><rect x="1" y="2" width="16" height="10" fill="#7d7d7d"/><text x="1" y="11" font-family="Liberation Sans" font-size="11" font-weight="bold" fill="#222">AV</text><path d="M1 15.500h16M3 13.500l-2 2 2 2M15 13.500l2 2-2 2" stroke="#222" fill="none" stroke-width=".9"/></svg>
<svg class="abs" style="left:417px;top:3px" width="13" height="18" viewBox="0 0 13 18"><defs><linearGradient id="spg" x1="0" y1="0" x2="0" y2="1"><stop offset="0" stop-color="#fdfdfd"/><stop offset="1" stop-color="#dcdcdc"/></linearGradient></defs><path d="M3 .5H12.500V17.500H3A2.500 2.500 0 0 1 .5 15V3A2.500 2.500 0 0 1 3 .5z" fill="url(#spg)" stroke="#a8a8a8"/><path d="M1 9h11.500" stroke="#8a8a8a"/><path d="M6.500 2.500l3.500 4.500h-7zM6.500 15.500l3.500-4.500h-7z" fill="#1c1c1c"/></svg>
<svg class="abs" style="left:417px;top:24px" width="13" height="18" viewBox="0 0 13 18"><defs><linearGradient id="spg" x1="0" y1="0" x2="0" y2="1"><stop offset="0" stop-color="#fdfdfd"/><stop offset="1" stop-color="#dcdcdc"/></linearGradient></defs><path d="M3 .5H12.500V17.500H3A2.500 2.500 0 0 1 .5 15V3A2.500 2.500 0 0 1 3 .5z" fill="url(#spg)" stroke="#a8a8a8"/><path d="M1 9h11.500" stroke="#8a8a8a"/><path d="M6.500 2.500l3.500 4.500h-7zM6.500 15.500l3.500-4.500h-7z" fill="#1c1c1c"/></svg>
<div class="fld sq" style="left:430px;top:3px;width:58px">Metrics<i class="dd"></i></div>
<div class="fld sq" style="left:430px;top:24px;width:58px">0<i class="dd"></i></div>
<div class="abs vsep" style="left:495px"></div>
<svg class="abs" style="left:501px;top:4px" width="20" height="18" viewBox="0 0 20 18"><path d="M3 2v14M1 4l2-2.500 2 2.500M1 14l2 2.500 2-2.500" stroke="#222" fill="none" stroke-width="1"/><text x="7" y="16" font-family="Liberation Serif" font-size="18" font-weight="bold" fill="#222">T</text></svg>
<svg class="abs" style="left:502px;top:25px" width="20" height="18" viewBox="0 0 20 18"><text x="0" y="12" font-family="Liberation Sans" font-size="11" fill="#222">A</text><text x="8" y="8" font-family="Liberation Sans" font-size="8" fill="#222">a</text><path d="M8 10.500h6M1 15.500h14M12.500 13.500l2.500 2-2.500 2" stroke="#222" fill="none" stroke-width=".9"/></svg>
<svg class="abs" style="left:523px;top:3px" width="13" height="18" viewBox="0 0 13 18"><defs><linearGradient id="spg" x1="0" y1="0" x2="0" y2="1"><stop offset="0" stop-color="#fdfdfd"/><stop offset="1" stop-color="#dcdcdc"/></linearGradient></defs><path d="M3 .5H12.500V17.500H3A2.500 2.500 0 0 1 .5 15V3A2.500 2.500 0 0 1 3 .5z" fill="url(#spg)" stroke="#a8a8a8"/><path d="M1 9h11.500" stroke="#8a8a8a"/><path d="M6.500 2.500l3.500 4.500h-7zM6.500 15.500l3.500-4.500h-7z" fill="#1c1c1c"/></svg>
<svg class="abs" style="left:523px;top:24px" width="13" height="18" viewBox="0 0 13 18"><defs><linearGradient id="spg" x1="0" y1="0" x2="0" y2="1"><stop offset="0" stop-color="#fdfdfd"/><stop offset="1" stop-color="#dcdcdc"/></linearGradient></defs><path d="M3 .5H12.500V17.500H3A2.500 2.500 0 0 1 .5 15V3A2.500 2.500 0 0 1 3 .5z" fill="url(#spg)" stroke="#a8a8a8"/><path d="M1 9h11.500" stroke="#8a8a8a"/><path d="M6.500 2.500l3.500 4.500h-7zM6.500 15.500l3.500-4.500h-7z" fill="#1c1c1c"/></svg>
<div class="fld sq" style="left:536px;top:3px;width:60px">100%<i class="dd"></i></div>
<div class="fld sq" style="left:536px;top:24px;width:60px">0 pt</div>
<svg class="abs" style="left:603px;top:4px" width="20" height="18" viewBox="0 0 20 18"><text x="2" y="13" font-family="Liberation Serif" font-size="18" font-weight="bold" fill="#222" textLength="16" lengthAdjust="spacingAndGlyphs">T</text><path d="M2 16h16M4 14.500l-2.500 1.500 2.500 1.500M16 14.500l2.500 1.500-2.500 1.500" stroke="#222" fill="none" stroke-width=".9"/></svg>
<span class="abs" style="left:606px;top:25px;font-family:'Liberation Serif',serif;font-weight:bold;font-style:italic;font-size:19px;line-height:18px;color:#222">T</span>
<svg class="abs" style="left:627px;top:3px" width="13" height="18" viewBox="0 0 13 18"><defs><linearGradient id="spg" x1="0" y1="0" x2="0" y2="1"><stop offset="0" stop-color="#fdfdfd"/><stop offset="1" stop-color="#dcdcdc"/></linearGradient></defs><path d="M3 .5H12.500V17.500H3A2.500 2.500 0 0 1 .5 15V3A2.500 2.500 0 0 1 3 .5z" fill="url(#spg)" stroke="#a8a8a8"/><path d="M1 9h11.500" stroke="#8a8a8a"/><path d="M6.500 2.500l3.500 4.500h-7zM6.500 15.500l3.500-4.500h-7z" fill="#1c1c1c"/></svg>
<svg class="abs" style="left:627px;top:24px" width="13" height="18" viewBox="0 0 13 18"><defs><linearGradient id="spg" x1="0" y1="0" x2="0" y2="1"><stop offset="0" stop-color="#fdfdfd"/><stop offset="1" stop-color="#dcdcdc"/></linearGradient></defs><path d="M3 .5H12.500V17.500H3A2.500 2.500 0 0 1 .5 15V3A2.500 2.500 0 0 1 3 .5z" fill="url(#spg)" stroke="#a8a8a8"/><path d="M1 9h11.500" stroke="#8a8a8a"/><path d="M6.500 2.500l3.500 4.500h-7zM6.500 15.500l3.500-4.500h-7z" fill="#1c1c1c"/></svg>
<div class="fld sq" style="left:640px;top:3px;width:58px">100%<i class="dd"></i></div>
<div class="fld sq" style="left:640px;top:24px;width:59px">0&deg;</div>
<div class="abs vsep" style="left:706px"></div><div class="abs vsep" style="left:750px"></div>
<div class="abs" style="left:713px;top:4px;width:17px;height:17px;background:#fff;border:1.500px solid #222"></div>
<div class="abs arrowbtn" style="left:732px;top:4px"></div>
<div class="abs" style="left:713px;top:25px;width:17px;height:17px;background:#fff;border:1.500px solid #222;overflow:hidden"><div style="position:absolute;left:-4px;top:6px;width:24px;height:2px;background:#c01030;transform:rotate(-45deg)"></div></div>
<div class="abs arrowbtn" style="left:732px;top:25px"></div>
<span class="abs" style="left:754px;top:3px;font-size:17px;font-weight:bold;line-height:20px;color:#222;letter-spacing:-.5px">A<span style="font-size:11px">.</span></span>
<div class="pop" style="left:775px;top:4px;width:137px">[None]<i class="ud"></i></div>
<div class="pop" style="left:775px;top:25px;width:137px">English: UK<i class="ud"></i></div>
<div class="abs vsep" style="left:916px"></div><div class="abs vsep" style="left:920px"></div>
<svg class="abs" style="left:927px;top:4px" width="20" height="17" viewBox="0 0 20 17"><rect x="0" y="0" width="20" height="17" fill="#8a8a8a" stroke="#6a6a6a"/><rect x="4" y="3.0" width="12" height="1.200" fill="#2a2a2a"/><rect x="4" y="5.2" width="9" height="1.200" fill="#2a2a2a"/><rect x="4" y="7.4" width="12" height="1.200" fill="#2a2a2a"/><rect x="4" y="9.6" width="7" height="1.200" fill="#2a2a2a"/><rect x="4" y="11.8" width="12" height="1.200" fill="#2a2a2a"/><rect x="4" y="14.0" width="9" height="1.200" fill="#2a2a2a"/></svg>
<svg class="abs" style="left:950px;top:4px" width="20" height="17" viewBox="0 0 20 17"><rect x="4.0" y="3.0" width="12" height="1.200" fill="#2a2a2a"/><rect x="6.0" y="5.2" width="8" height="1.200" fill="#2a2a2a"/><rect x="4.0" y="7.4" width="12" height="1.200" fill="#2a2a2a"/><rect x="7.0" y="9.6" width="6" height="1.200" fill="#2a2a2a"/><rect x="4.0" y="11.8" width="12" height="1.200" fill="#2a2a2a"/><rect x="6.0" y="14.0" width="8" height="1.200" fill="#2a2a2a"/></svg>
<svg class="abs" style="left:972px;top:4px" width="20" height="17" viewBox="0 0 20 17"><rect x="4" y="3.0" width="12" height="1.200" fill="#2a2a2a"/><rect x="7" y="5.2" width="9" height="1.200" fill="#2a2a2a"/><rect x="4" y="7.4" width="12" height="1.200" fill="#2a2a2a"/><rect x="9" y="9.6" width="7" height="1.200" fill="#2a2a2a"/><rect x="4" y="11.8" width="12" height="1.200" fill="#2a2a2a"/><rect x="7" y="14.0" width="9" height="1.200" fill="#2a2a2a"/></svg>
<svg class="abs" style="left:993px;top:4px" width="20" height="17" viewBox="0 0 20 17"><rect x="4" y="3.0" width="12" height="1.200" fill="#2a2a2a"/><rect x="4" y="5.2" width="12" height="1.200" fill="#2a2a2a"/><rect x="4" y="7.4" width="12" height="1.200" fill="#2a2a2a"/><rect x="4" y="9.6" width="12" height="1.200" fill="#2a2a2a"/><rect x="4" y="11.8" width="12" height="1.200" fill="#2a2a2a"/><rect x="4" y="14.0" width="12" height="1.200" fill="#2a2a2a"/></svg>
<svg class="abs" style="left:927px;top:25px" width="20" height="17" viewBox="0 0 20 17"><rect x="4" y="3.0" width="12" height="1.200" fill="#2a2a2a"/><rect x="4" y="5.2" width="12" height="1.200" fill="#2a2a2a"/><rect x="4" y="7.4" width="12" height="1.200" fill="#2a2a2a"/><rect x="4" y="9.6" width="12" height="1.200" fill="#2a2a2a"/><rect x="4" y="11.8" width="12" height="1.200" fill="#2a2a2a"/><rect x="4" y="14.0" width="7" height="1.200" fill="#2a2a2a"/></svg>
<svg class="abs" style="left:950px;top:25px" width="20" height="17" viewBox="0 0 20 17"><rect x="4.0" y="3.0" width="12" height="1.200" fill="#2a2a2a"/><rect x="4.0" y="5.2" width="12" height="1.200" fill="#2a2a2a"/><rect x="4.0" y="7.4" width="12" height="1.200" fill="#2a2a2a"/><rect x="4.0" y="9.6" width="12" height="1.200" fill="#2a2a2a"/><rect x="4.0" y="11.8" width="12" height="1.200" fill="#2a2a2a"/><rect x="6.5" y="14.0" width="7" height="1.200" fill="#2a2a2a"/></svg>
<svg class="abs" style="left:972px;top:25px" width="20" height="17" viewBox="0 0 20 17"><rect x="4" y="3.0" width="12" height="1.200" fill="#2a2a2a"/><rect x="4" y="5.2" width="12" height="1.200" fill="#2a2a2a"/><rect x="4" y="7.4" width="12" height="1.200" fill="#2a2a2a"/><rect x="4" y="9.6" width="12" height="1.200" fill="#2a2a2a"/><rect x="4" y="11.8" width="12" height="1.200" fill="#2a2a2a"/><rect x="9" y="14.0" width="7" height="1.200" fill="#2a2a2a"/></svg>
<svg class="abs" style="left:993px;top:25px" width="20" height="17" viewBox="0 0 20 17"><rect x="4" y="3.0" width="12" height="1.200" fill="#2a2a2a"/><rect x="4" y="5.2" width="12" height="1.200" fill="#2a2a2a"/><rect x="4" y="7.4" width="12" height="1.200" fill="#2a2a2a"/><rect x="4" y="9.6" width="12" height="1.200" fill="#2a2a2a"/><rect x="4" y="11.8" width="12" height="1.200" fill="#2a2a2a"/><rect x="4" y="14.0" width="12" height="1.200" fill="#2a2a2a"/></svg>
<div class="abs" style="left:1011px;top:7px;width:1.500px;height:12px;background:#2a2a2a"></div><div class="abs" style="left:1011px;top:28px;width:1.500px;height:12px;background:#2a2a2a"></div>
<svg class="abs" style="left:1023px;top:4px" width="19" height="17" viewBox="0 0 19 17"><path d="M0 8.500h5M3.500 6.500l2 2-2 2" stroke="#222" fill="none"/><path d="M7 2v13" stroke="#222"/><rect x="9" y="2.5" width="9" height="1.200" fill="#222"/><rect x="9" y="4.7" width="6" height="1.200" fill="#222"/><rect x="9" y="6.9" width="9" height="1.200" fill="#222"/><rect x="9" y="9.1" width="6" height="1.200" fill="#222"/><rect x="9" y="11.3" width="9" height="1.200" fill="#222"/><rect x="9" y="13.5" width="6" height="1.200" fill="#222"/></svg>
<svg class="abs" style="left:1023px;top:25px" width="19" height="17" viewBox="0 0 19 17"><path d="M0 3.500h4M2.500 1.500l2 2-2 2" stroke="#222" fill="none"/><rect x="8" y="2.5" width="10" height="1.200" fill="#222"/><rect x="5" y="4.7" width="13" height="1.200" fill="#222"/><rect x="5" y="6.9" width="13" height="1.200" fill="#222"/><rect x="5" y="9.1" width="13" height="1.200" fill="#222"/><rect x="5" y="11.3" width="13" height="1.200" fill="#222"/><rect x="5" y="13.5" width="13" height="1.200" fill="#222"/></svg>
<svg class="abs" style="left:1047px;top:3px" width="13" height="18" viewBox="0 0 13 18"><defs><linearGradient id="spg" x1="0" y1="0" x2="0" y2="1"><stop offset="0" stop-color="#fdfdfd"/><stop offset="1" stop-color="#dcdcdc"/></linearGradient></defs><path d="M3 .5H12.500V17.500H3A2.500 2.500 0 0 1 .5 15V3A2.500 2.500 0 0 1 3 .5z" fill="url(#spg)" stroke="#a8a8a8"/><path d="M1 9h11.500" stroke="#8a8a8a"/><path d="M6.500 2.500l3.500 4.500h-7zM6.500 15.500l3.500-4.500h-7z" fill="#1c1c1c"/></svg>
<svg class="abs" style="left:1047px;top:24px" width="13" height="18" viewBox="0 0 13 18"><defs><linearGradient id="spg" x1="0" y1="0" x2="0" y2="1"><stop offset="0" stop-color="#fdfdfd"/><stop offset="1" stop-color="#dcdcdc"/></linearGradient></defs><path d="M3 .5H12.500V17.500H3A2.500 2.500 0 0 1 .5 15V3A2.500 2.500 0 0 1 3 .5z" fill="url(#spg)" stroke="#a8a8a8"/><path d="M1 9h11.500" stroke="#8a8a8a"/><path d="M6.500 2.500l3.500 4.500h-7zM6.500 15.500l3.500-4.500h-7z" fill="#1c1c1c"/></svg>
<div class="fld sq" style="left:1060px;top:3px;width:50px">0 mm</div>
<div class="fld sq" style="left:1060px;top:24px;width:50px">0 mm</div>
<svg class="abs" style="left:1116px;top:4px" width="19" height="17" viewBox="0 0 19 17"><rect x="1" y="2.5" width="9" height="1.200" fill="#222"/><rect x="1" y="4.7" width="6" height="1.200" fill="#222"/><rect x="1" y="6.9" width="9" height="1.200" fill="#222"/><rect x="1" y="9.1" width="6" height="1.200" fill="#222"/><rect x="1" y="11.3" width="9" height="1.200" fill="#222"/><rect x="1" y="13.5" width="6" height="1.200" fill="#222"/><path d="M11.500 2v13" stroke="#222"/><path d="M18.500 8.500h-5M15 6.500l-2 2 2 2" stroke="#222" fill="none"/></svg>
<svg class="abs" style="left:1116px;top:25px" width="19" height="17" viewBox="0 0 19 17"><rect x="1" y="2.5" width="12" height="1.200" fill="#222"/><rect x="1" y="4.7" width="12" height="1.200" fill="#222"/><rect x="1" y="6.9" width="12" height="1.200" fill="#222"/><rect x="1" y="9.1" width="12" height="1.200" fill="#222"/><rect x="1" y="11.3" width="12" height="1.200" fill="#222"/><rect x="1" y="13.5" width="8" height="1.200" fill="#222"/><path d="M18 14h-4M15.500 12l-2 2 2 2" stroke="#222" fill="none"/></svg>
<svg class="abs" style="left:1138px;top:3px" width="13" height="18" viewBox="0 0 13 18"><defs><linearGradient id="spg" x1="0" y1="0" x2="0" y2="1"><stop offset="0" stop-color="#fdfdfd"/><stop offset="1" stop-color="#dcdcdc"/></linearGradient></defs><path d="M3 .5H12.500V17.500H3A2.500 2.500 0 0 1 .5 15V3A2.500 2.500 0 0 1 3 .5z" fill="url(#spg)" stroke="#a8a8a8"/><path d="M1 9h11.500" stroke="#8a8a8a"/><path d="M6.500 2.500l3.500 4.500h-7zM6.500 15.500l3.500-4.500h-7z" fill="#1c1c1c"/></svg>
<svg class="abs" style="left:1138px;top:24px" width="13" height="18" viewBox="0 0 13 18"><defs><linearGradient id="spg" x1="0" y1="0" x2="0" y2="1"><stop offset="0" stop-color="#fdfdfd"/><stop offset="1" stop-color="#dcdcdc"/></linearGradient></defs><path d="M3 .5H12.500V17.500H3A2.500 2.500 0 0 1 .5 15V3A2.500 2.500 0 0 1 3 .5z" fill="url(#spg)" stroke="#a8a8a8"/><path d="M1 9h11.500" stroke="#8a8a8a"/><path d="M6.500 2.500l3.500 4.500h-7zM6.500 15.500l3.500-4.500h-7z" fill="#1c1c1c"/></svg>
<div class="fld sq" style="left:1151px;top:3px;width:50px">0 mm</div>
<div class="fld sq" style="left:1151px;top:24px;width:50px">0 mm</div>
<div class="abs vsep" style="left:1205px"></div>
<svg class="abs" style="left:1235px;top:15px" width="14" height="17" viewBox="0 0 14 17"><path d="M9 0L2 9h4l-2.500 8L12 6.500H7.500z" fill="#333"/></svg>
<div class="abs vsep" style="left:1254px"></div>
<svg class="abs" style="left:1261px;top:17px" width="16" height="9" viewBox="0 0 16 9"><path d="M0 2.500h5L2.500 6z" fill="#222"/><path d="M7 1.500h8M7 4.500h8M7 7.500h8" stroke="#222" stroke-width="1.200"/></svg>
</div>
<div id="tabbar" class="abs">
<div class="tab" style="left:0;width:124px"><b class="x" style="left:8px">&times;</b><span style="left:23px;letter-spacing:.1px">*text.indd @ 142%</span></div>
<div class="tab" style="left:124px;width:245px"><b class="x" style="left:9px">&times;</b><span style="left:23px;letter-spacing:.15px">*travel_magazine.indd @ 98% [Converted]</span></div>
<div class="tab act" style="left:369px;width:134px"><b class="x" style="left:7px">&times;</b><span style="left:23px">*menu.indd @ 132%</span></div>
</div>
<div id="tools" class="abs">
<div class="abs" style="left:0;top:553px;width:2px;height:60px;background:#8e8e8e"></div>
<div class="abs" style="left:0;top:0;width:33px;height:10.500px;background:linear-gradient(#7a7a7a,#8e8e8e)"></div>
<svg class="abs" style="left:5px;top:3px" width="8" height="5" viewBox="0 0 10 6"><path d="M0 0l4 3-4 3zM5 0l4 3-4 3z" fill="#2c2c2c"/></svg>
<div class="abs" style="left:0;top:10.500px;width:32px;height:13px;background:#fcfcfc"></div>
<div class="abs" style="left:3px;top:140px;width:26px;height:20px;background:linear-gradient(#707070,#a6a6a6);border:1px solid #666"></div>
<div class="abs" style="left:3px;top:135px;width:26px;height:1px;background:#555"></div>
<div class="abs" style="left:3px;top:269px;width:26px;height:1px;background:#555"></div>
<div class="abs" style="left:3px;top:360px;width:26px;height:1px;background:#555"></div>
<div class="abs" style="left:3px;top:450px;width:26px;height:1px;background:#555"></div>
<svg class="abs" style="left:0;top:0" width="33" height="616" viewBox="0 104 33 616"><path d="M12 133l10 9.500h-4.200l2.500 5.200-2 1-2.500-5.200-3.800 3z" fill="#1c1c1c"/><path d="M12 154l10 9.500h-4.200l2.500 5.200-2 1-2.500-5.200-3.800 3z" fill="#fff" stroke="#1c1c1c" stroke-width="1.100"/><path d="M10.500 177.500h7l4 4v10h-11z" fill="#fff" stroke="#1c1c1c" stroke-width="1.300"/><path d="M17.500 177.500v4h4" fill="none" stroke="#1c1c1c" stroke-width="1.100"/><path d="M19 188l5 3.500-2.500.5-1 2z" fill="#1c1c1c"/><path d="M7 198v13M25 198v13M10 204.500h12M13 201.500l-3.200 3 3.200 3M19 201.500l3.200 3-3.200 3" fill="none" stroke="#1c1c1c" stroke-width="1.500"/><path d="M8.500 222v10h16v-10" fill="none" stroke="#1c1c1c" stroke-width="1.500"/><path d="M11 227h1.500M14 227h1.500M17 227h1.500M20 227h1.500M11 229.500h1.500M14 229.500h1.500M17 229.500h1.500M20 229.500h1.500" stroke="#1c1c1c" stroke-width="1.200"/><path d="M12 215l6 6M18.500 217v4.500H14" fill="none" stroke="#1c1c1c" stroke-width="1.700"/><text x="9" y="261" font-family="Liberation Serif" font-size="20" fill="#1c1c1c">T</text><path d="M24 260h2.500v-2.500z" fill="#1c1c1c"/><path d="M9.500 281L22.500 268" stroke="#1c1c1c" stroke-width="1.400"/><path d="M9 304l2-8 7-5 5 5-5 7zM9 304l6-6" fill="#fff" stroke="#1c1c1c" stroke-width="1.300" stroke-linejoin="round"/><circle cx="15.500" cy="297.500" r="1.300" fill="#1c1c1c"/><path d="M18.500 290.500l2-2 5 5-2 2" fill="#1c1c1c"/><path d="M24 304h2.500v-2.500z" fill="#1c1c1c"/><path d="M9 325.500l1.500-5 9-9 3.500 3.500-9 9z" fill="#555" stroke="#1c1c1c" stroke-width="1.200" stroke-linejoin="round"/><path d="M9 325.500l1.500-5 3.500 3.500z" fill="#fff" stroke="#1c1c1c" stroke-width=".8"/><path d="M24 325h2.500v-2.500z" fill="#1c1c1c"/><rect x="9.500" y="331.500" width="13" height="12" fill="#a4a4a4" stroke="#1c1c1c" stroke-width="1.500"/><path d="M9.500 331.500l13 12M22.500 331.500l-13 12" stroke="#1c1c1c" stroke-width="1.200"/><path d="M24 347h2.500v-2.500z" fill="#1c1c1c"/><defs><linearGradient id="rg" x1="0" y1="0" x2="0" y2="1"><stop offset="0" stop-color="#b8b8b8"/><stop offset="1" stop-color="#7a7a7a"/></linearGradient><linearGradient id="bg2" x1="0" y1="0" x2="0" y2="1"><stop offset="0" stop-color="#6c6c6c"/><stop offset="1" stop-color="#adadad"/></linearGradient><linearGradient id="gs" x1="0" y1="0" x2="1" y2="0"><stop offset="0" stop-color="#111"/><stop offset="1" stop-color="#fff"/></linearGradient><linearGradient id="gf" x1="0" y1="0" x2="0" y2="1"><stop offset="0" stop-color="#111"/><stop offset="1" stop-color="#eee"/></linearGradient></defs><rect x="9.500" y="353.500" width="13" height="11" fill="url(#rg)" stroke="#1c1c1c" stroke-width="1.300"/><path d="M24 368h2.500v-2.500z" fill="#1c1c1c"/><path d="M8.500 379l11 8.500M8.500 391.500l11-8.500" stroke="#1c1c1c" stroke-width="1.700" stroke-linecap="round"/><circle cx="21.500" cy="381" r="2.500" fill="#ebebeb" stroke="#1c1c1c" stroke-width="1.400"/><circle cx="21.500" cy="389.500" r="2.500" fill="#ebebeb" stroke="#1c1c1c" stroke-width="1.400"/><rect x="7.500" y="406.500" width="9" height="9" fill="#fff" stroke="#1c1c1c" stroke-width="1.200"/><path d="M11.500 404.500v-4h11.500v11H18" fill="#f2f2f2" stroke="#1c1c1c" stroke-width="1.100"/><path d="M13 411l6.500-6.500M16 404h4v4" fill="none" stroke="#1c1c1c" stroke-width="1.400"/><path d="M24 418h2.500v-2.500z" fill="#1c1c1c"/><rect x="9.500" y="422.500" width="14" height="12" fill="url(#gs)" stroke="#1c1c1c" stroke-width="1.200"/><rect x="9.500" y="443.500" width="14" height="12" fill="url(#gf)" stroke="#1c1c1c" stroke-width="1.200"/><path d="M10 452l2-3 2 3 2-3 2 3 2-3 2 3 1-1.500v4.500H10z" fill="#fff" opacity=".85"/><path d="M9.500 471.500h13v9l-4 4h-9z" fill="#f4f4f4" stroke="#1c1c1c" stroke-width="1.300"/><path d="M12 475h8M12 477.500h8M12 480h5M22.500 480.500h-4v4" fill="none" stroke="#1c1c1c" stroke-width="1"/><path d="M9 507.500l1-3.500 7-7 2.500 2.500-7 7z" fill="#fff" stroke="#1c1c1c" stroke-width="1.200" stroke-linejoin="round"/><path d="M16 495.500l4.500 4.500M17.500 496l3-3.500q2.500-.5 2 2l-3.500 3z" fill="#1c1c1c" stroke="#1c1c1c" stroke-width="1.400"/><path d="M24 508h2.500v-2.500z" fill="#1c1c1c"/><path transform="translate(0 1.5)" d="M11.500 521.500l-2.500-4q-.5-2 1.500-1.500l2 2.500v-6.500q1-1.500 2 0v-1.500q1-1.500 2.200 0v1q1-1.200 2.200 0v1.500q1-1 2 0v8q0 4-2.500 6.500h-6q-2-2-2.900-6z" fill="#fff" stroke="#1c1c1c" stroke-width="1.200" stroke-linejoin="round"/><path transform="translate(0 1.5)" d="M15 511.500v5M17.200 510.500v6M19.400 511.500v5" stroke="#1c1c1c" stroke-width=".9"/><circle cx="14.500" cy="538.500" r="5.200" fill="#dcdcdc" stroke="#3a3a3a" stroke-width="1.700"/><path d="M18.500 542l5 5.500" stroke="#1c1c1c" stroke-width="2.800" stroke-linecap="round"/><rect x="14.500" y="568.500" width="11" height="11" fill="#fff" stroke="#1c1c1c" stroke-width="1.300"/><rect x="17" y="571" width="6" height="6" fill="#ececec" stroke="#1c1c1c" stroke-width=".8"/><path d="M15 579l10-10" stroke="#c01030" stroke-width="1.700"/><rect x="6.500" y="561.500" width="11" height="11" fill="#fff" stroke="#1c1c1c" stroke-width="1.600"/><path d="M20 563q3-1 3.500 2.500M22 564.500l1.500 1.500 1.500-1.500" fill="none" stroke="#1c1c1c" stroke-width=".9"/><rect x="8.500" y="583.500" width="5" height="5" fill="#fff" stroke="#1c1c1c" stroke-width="1"/><rect x="5.500" y="580.500" width="5" height="5" fill="#fff" stroke="#8a1030" stroke-width="1.400"/><path d="M6 586l5-5" stroke="#c01030" stroke-width="1"/><rect x="7.500" y="593.500" width="7" height="6" fill="#cfcfcf" stroke="#8a8a8a"/><rect x="9.500" y="595.500" width="3" height="2.500" fill="#fff" stroke="#777" stroke-width=".6"/><rect x="17.500" y="593.500" width="10" height="7" fill="#8e8e8e" stroke="#666"/><text x="20" y="600" font-family="Liberation Serif" font-weight="bold" font-size="8" fill="#111">T</text><rect x="4.500" y="608.500" width="24" height="19" fill="url(#bg2)" stroke="#666"/><rect x="9.500" y="612.500" width="11" height="11" fill="#fff" stroke="#1c1c1c" stroke-width="1.300"/><path d="M24 626h2.500v-2.500z" fill="#1c1c1c"/><rect x="4.500" y="632.500" width="24" height="19" fill="url(#bg2)" stroke="#666"/><rect x="9.500" y="637.500" width="11" height="10" rx="1" fill="#b8b8b8" stroke="#1c1c1c" stroke-width="1.300"/><rect x="11.500" y="639.500" width="7" height="6" fill="#2c2c2c" stroke="#555" stroke-width=".6"/><path d="M24 650h2.500v-2.500z" fill="#1c1c1c"/></svg>
</div>
<div id="rightdock" class="abs">
<div class="abs" style="left:0;top:0;width:356px;height:13px;background:linear-gradient(#727272,#8e8e8e)"></div>
<svg class="abs" style="left:263px;top:4px" width="10" height="6" viewBox="0 0 10 6"><path d="M0 0l4 3-4 3zM5 0l4 3-4 3z" fill="#2c2c2c"/></svg>
<svg class="abs" style="left:303px;top:4px" width="10" height="6" viewBox="0 0 10 6"><path d="M4 0L0 3l4 3zM9 0L5 3l4 3z" fill="#2c2c2c"/></svg>
<svg class="abs" style="left:343px;top:4px" width="10" height="6" viewBox="0 0 10 6"><path d="M4 0L0 3l4 3zM9 0L5 3l4 3z" fill="#2c2c2c"/></svg>
<div class="abs" style="left:0;top:0;width:2px;height:617px;background:#5e5e5e"></div>
<div class="abs" style="left:2px;top:13px;width:273px;height:16px;background:linear-gradient(#a8a8a8,#9a9a9a)"></div>
<div class="abs" style="left:2px;top:13px;width:72px;height:17px;background:#e9e9e9;font-size:11px;font-weight:bold;line-height:17px;color:#222;padding-left:13px;letter-spacing:-.1px">Paragraph</div>
<svg class="abs" style="left:6px;top:17px" width="7" height="10" viewBox="0 0 7 10"><path d="M1 4l2.500-3 2.500 3M1 6l2.500 3 2.500-3" fill="none" stroke="#222" stroke-width="1"/></svg>
<svg class="abs" style="left:257px;top:18px" width="14" height="8" viewBox="0 0 14 8"><path d="M0 2h5L2.500 5.500z" fill="#222"/><path d="M6.500 1h7M6.500 3.500h7M6.500 6h7" stroke="#222" stroke-width="1.100"/></svg>
<div class="abs" style="left:2px;top:29px;width:273px;height:151px;background:#ebebeb"></div>
<svg class="abs" style="left:6px;top:37px" width="20" height="16" viewBox="0 0 20 16"><rect x=".5" y=".5" width="19" height="15" fill="#8a8a8a" stroke="#707070"/><rect x="4" y="2.5" width="12" height="1.200" fill="#2a2a2a"/><rect x="4" y="4.6" width="9" height="1.200" fill="#2a2a2a"/><rect x="4" y="6.7" width="12" height="1.200" fill="#2a2a2a"/><rect x="4" y="8.8" width="7" height="1.200" fill="#2a2a2a"/><rect x="4" y="10.9" width="12" height="1.200" fill="#2a2a2a"/><rect x="4" y="13.0" width="9" height="1.200" fill="#2a2a2a"/></svg>
<svg class="abs" style="left:26px;top:37px" width="20" height="16" viewBox="0 0 20 16"><rect x="4.0" y="2.5" width="12" height="1.200" fill="#2a2a2a"/><rect x="6.0" y="4.6" width="8" height="1.200" fill="#2a2a2a"/><rect x="4.0" y="6.7" width="12" height="1.200" fill="#2a2a2a"/><rect x="7.0" y="8.8" width="6" height="1.200" fill="#2a2a2a"/><rect x="4.0" y="10.9" width="12" height="1.200" fill="#2a2a2a"/><rect x="6.0" y="13.0" width="8" height="1.200" fill="#2a2a2a"/></svg>
<svg class="abs" style="left:46px;top:37px" width="20" height="16" viewBox="0 0 20 16"><rect x="4" y="2.5" width="12" height="1.200" fill="#2a2a2a"/><rect x="7" y="4.6" width="9" height="1.200" fill="#2a2a2a"/><rect x="4" y="6.7" width="12" height="1.200" fill="#2a2a2a"/><rect x="9" y="8.8" width="7" height="1.200" fill="#2a2a2a"/><rect x="4" y="10.9" width="12" height="1.200" fill="#2a2a2a"/><rect x="7" y="13.0" width="9" height="1.200" fill="#2a2a2a"/></svg>
<svg class="abs" style="left:76px;top:37px" width="20" height="16" viewBox="0 0 20 16"><rect x="4" y="2.5" width="12" height="1.200" fill="#2a2a2a"/><rect x="4" y="4.6" width="12" height="1.200" fill="#2a2a2a"/><rect x="4" y="6.7" width="12" height="1.200" fill="#2a2a2a"/><rect x="4" y="8.8" width="12" height="1.200" fill="#2a2a2a"/><rect x="4" y="10.9" width="12" height="1.200" fill="#2a2a2a"/><rect x="4" y="13.0" width="7" height="1.200" fill="#2a2a2a"/></svg>
<svg class="abs" style="left:96px;top:37px" width="20" height="16" viewBox="0 0 20 16"><rect x="4.0" y="2.5" width="12" height="1.200" fill="#2a2a2a"/><rect x="4.0" y="4.6" width="12" height="1.200" fill="#2a2a2a"/><rect x="4.0" y="6.7" width="12" height="1.200" fill="#2a2a2a"/><rect x="4.0" y="8.8" width="12" height="1.200" fill="#2a2a2a"/><rect x="4.0" y="10.9" width="12" height="1.200" fill="#2a2a2a"/><rect x="6.5" y="13.0" width="7" height="1.200" fill="#2a2a2a"/></svg>
<svg class="abs" style="left:116px;top:37px" width="20" height="16" viewBox="0 0 20 16"><rect x="4" y="2.5" width="12" height="1.200" fill="#2a2a2a"/><rect x="4" y="4.6" width="12" height="1.200" fill="#2a2a2a"/><rect x="4" y="6.7" width="12" height="1.200" fill="#2a2a2a"/><rect x="4" y="8.8" width="12" height="1.200" fill="#2a2a2a"/><rect x="4" y="10.9" width="12" height="1.200" fill="#2a2a2a"/><rect x="9" y="13.0" width="7" height="1.200" fill="#2a2a2a"/></svg>
<svg class="abs" style="left:136px;top:37px" width="20" height="16" viewBox="0 0 20 16"><rect x="4" y="2.5" width="12" height="1.200" fill="#2a2a2a"/><rect x="4" y="4.6" width="12" height="1.200" fill="#2a2a2a"/><rect x="4" y="6.7" width="12" height="1.200" fill="#2a2a2a"/><rect x="4" y="8.8" width="12" height="1.200" fill="#2a2a2a"/><rect x="4" y="10.9" width="12" height="1.200" fill="#2a2a2a"/><rect x="4" y="13.0" width="12" height="1.200" fill="#2a2a2a"/></svg>
<svg class="abs" style="left:164px;top:37px" width="20" height="16" viewBox="0 0 20 16"><rect x="4" y="2.5" width="12" height="1.200" fill="#2a2a2a"/><rect x="7" y="4.6" width="9" height="1.200" fill="#2a2a2a"/><rect x="4" y="6.7" width="12" height="1.200" fill="#2a2a2a"/><rect x="9" y="8.8" width="7" height="1.200" fill="#2a2a2a"/><rect x="4" y="10.9" width="12" height="1.200" fill="#2a2a2a"/><rect x="7" y="13.0" width="9" height="1.200" fill="#2a2a2a"/></svg>
<svg class="abs" style="left:184px;top:37px" width="20" height="16" viewBox="0 0 20 16"><rect x="4" y="2.5" width="12" height="1.200" fill="#2a2a2a"/><rect x="4" y="4.6" width="9" height="1.200" fill="#2a2a2a"/><rect x="4" y="6.7" width="12" height="1.200" fill="#2a2a2a"/><rect x="4" y="8.8" width="7" height="1.200" fill="#2a2a2a"/><rect x="4" y="10.9" width="12" height="1.200" fill="#2a2a2a"/><rect x="4" y="13.0" width="9" height="1.200" fill="#2a2a2a"/></svg>
<div class="abs" style="left:181.5px;top:39px;width:1.200px;height:13px;background:#2a2a2a"></div><div class="abs" style="left:201.5px;top:39px;width:1.200px;height:13px;background:#2a2a2a"></div>
<div class="abs" style="left:6px;top:60px;width:199px;height:1px;background:#8c8c8c;box-shadow:0 1px 0 #fafafa"></div>
<div class="abs" style="left:6px;top:107.5px;width:199px;height:1px;background:#8c8c8c;box-shadow:0 1px 0 #fafafa"></div>
<div class="abs" style="left:6px;top:155.5px;width:199px;height:1px;background:#8c8c8c;box-shadow:0 1px 0 #fafafa"></div>
<svg class="abs" style="left:6px;top:63.5px" width="19" height="18" viewBox="0 0 19 18"><path d="M0 9h5M3.500 7l2 2-2 2" stroke="#222" fill="none"/><path d="M7 2v14" stroke="#222"/><rect x="9" y="3.0" width="8" height="1.200" fill="#222"/><rect x="9" y="5.2" width="6" height="1.200" fill="#222"/><rect x="9" y="7.4" width="8" height="1.200" fill="#222"/><rect x="9" y="9.6" width="6" height="1.200" fill="#222"/><rect x="9" y="11.8" width="8" height="1.200" fill="#222"/><rect x="9" y="14.0" width="6" height="1.200" fill="#222"/></svg>
<svg class="abs" style="left:27px;top:63.5px" width="15" height="18" viewBox="0 0 15 18" preserveAspectRatio="none"><rect x=".5" y=".5" width="14.500" height="17" fill="#fcfcfc" stroke="#b4b4b4"/><path d="M2 9h11" stroke="#6a6a6a" stroke-width="1.200"/><path d="M7.500 3.200l3 3.800h-6zM7.500 14.800l3-3.800h-6z" fill="#1c1c1c"/></svg>
<div class="fld pf" style="left:42px;top:63.5px;width:60px;height:18px;border-radius:0 3px 3px 0">0 mm</div>
<svg class="abs" style="left:108px;top:63.5px" width="19" height="18" viewBox="0 0 19 18"><rect x="1" y="3.0" width="8" height="1.200" fill="#222"/><rect x="1" y="5.2" width="6" height="1.200" fill="#222"/><rect x="1" y="7.4" width="8" height="1.200" fill="#222"/><rect x="1" y="9.6" width="6" height="1.200" fill="#222"/><rect x="1" y="11.8" width="8" height="1.200" fill="#222"/><rect x="1" y="14.0" width="6" height="1.200" fill="#222"/><path d="M11 2v14" stroke="#222"/><path d="M18 9h-5M14.500 7l-2 2 2 2" stroke="#222" fill="none"/></svg>
<svg class="abs" style="left:129px;top:63.5px" width="15" height="18" viewBox="0 0 15 18" preserveAspectRatio="none"><rect x=".5" y=".5" width="14.500" height="17" fill="#fcfcfc" stroke="#b4b4b4"/><path d="M2 9h11" stroke="#6a6a6a" stroke-width="1.200"/><path d="M7.500 3.200l3 3.800h-6zM7.500 14.800l3-3.800h-6z" fill="#1c1c1c"/></svg>
<div class="fld pf" style="left:144px;top:63.5px;width:60px;height:18px;border-radius:0 3px 3px 0">0 mm</div>
<svg class="abs" style="left:6px;top:84px" width="19" height="18" viewBox="0 0 19 18"><path d="M0 4h4M2.500 2l2 2-2 2" stroke="#222" fill="none"/><rect x="8" y="3.0" width="9" height="1.200" fill="#222"/><rect x="5" y="5.2" width="12" height="1.200" fill="#222"/><rect x="5" y="7.4" width="12" height="1.200" fill="#222"/><rect x="5" y="9.6" width="12" height="1.200" fill="#222"/><rect x="5" y="11.8" width="12" height="1.200" fill="#222"/><rect x="5" y="14.0" width="12" height="1.200" fill="#222"/></svg>
<svg class="abs" style="left:27px;top:84px" width="15" height="18" viewBox="0 0 15 18" preserveAspectRatio="none"><rect x=".5" y=".5" width="14.500" height="17" fill="#fcfcfc" stroke="#b4b4b4"/><path d="M2 9h11" stroke="#6a6a6a" stroke-width="1.200"/><path d="M7.500 3.200l3 3.800h-6zM7.500 14.800l3-3.800h-6z" fill="#1c1c1c"/></svg>
<div class="fld pf" style="left:42px;top:84px;width:60px;height:18px;border-radius:0 3px 3px 0">0 mm</div>
<svg class="abs" style="left:108px;top:84px" width="19" height="18" viewBox="0 0 19 18"><rect x="1" y="3.0" width="11" height="1.200" fill="#222"/><rect x="1" y="5.2" width="11" height="1.200" fill="#222"/><rect x="1" y="7.4" width="11" height="1.200" fill="#222"/><rect x="1" y="9.6" width="11" height="1.200" fill="#222"/><rect x="1" y="11.8" width="11" height="1.200" fill="#222"/><rect x="1" y="14.0" width="7" height="1.200" fill="#222"/><path d="M18 15h-4M15.500 13l-2 2 2 2" stroke="#222" fill="none"/></svg>
<svg class="abs" style="left:129px;top:84px" width="15" height="18" viewBox="0 0 15 18" preserveAspectRatio="none"><rect x=".5" y=".5" width="14.500" height="17" fill="#fcfcfc" stroke="#b4b4b4"/><path d="M2 9h11" stroke="#6a6a6a" stroke-width="1.200"/><path d="M7.500 3.200l3 3.800h-6zM7.500 14.800l3-3.800h-6z" fill="#1c1c1c"/></svg>
<div class="fld pf" style="left:144px;top:84px;width:60px;height:18px;border-radius:0 3px 3px 0">0 mm</div>
<svg class="abs" style="left:6px;top:111.5px" width="19" height="18" viewBox="0 0 19 18"><path d="M0 3h4M2.500 1l2 2-2 2" stroke="#222" fill="none"/><rect x="6" y="2" width="11" height="3.500" fill="#777"/><rect x="6" y="7.0" width="11" height="1.200" fill="#222"/><rect x="6" y="9.2" width="11" height="1.200" fill="#222"/><rect x="6" y="11.4" width="11" height="1.200" fill="#222"/><rect x="6" y="13.6" width="11" height="1.200" fill="#222"/><rect x="6" y="15.8" width="11" height="1.200" fill="#222"/></svg>
<svg class="abs" style="left:27px;top:111.5px" width="15" height="18" viewBox="0 0 15 18" preserveAspectRatio="none"><rect x=".5" y=".5" width="14.500" height="17" fill="#fcfcfc" stroke="#b4b4b4"/><path d="M2 9h11" stroke="#6a6a6a" stroke-width="1.200"/><path d="M7.500 3.200l3 3.800h-6zM7.500 14.800l3-3.800h-6z" fill="#1c1c1c"/></svg>
<div class="fld pf" style="left:42px;top:111.5px;width:60px;height:18px;border-radius:0 3px 3px 0">0 mm</div>
<svg class="abs" style="left:108px;top:111.5px" width="19" height="18" viewBox="0 0 19 18"><rect x="6" y="2.0" width="11" height="1.200" fill="#222"/><rect x="6" y="4.2" width="11" height="1.200" fill="#222"/><rect x="6" y="6.4" width="11" height="1.200" fill="#222"/><rect x="6" y="8.6" width="11" height="1.200" fill="#222"/><rect x="6" y="10.8" width="11" height="1.200" fill="#222"/><rect x="6" y="13" width="11" height="3.500" fill="#777"/><path d="M0 15h4M2.500 13l2 2-2 2" stroke="#222" fill="none"/></svg>
<svg class="abs" style="left:129px;top:111.5px" width="15" height="18" viewBox="0 0 15 18" preserveAspectRatio="none"><rect x=".5" y=".5" width="14.500" height="17" fill="#fcfcfc" stroke="#b4b4b4"/><path d="M2 9h11" stroke="#6a6a6a" stroke-width="1.200"/><path d="M7.500 3.200l3 3.800h-6zM7.500 14.800l3-3.800h-6z" fill="#1c1c1c"/></svg>
<div class="fld pf" style="left:144px;top:111.5px;width:60px;height:18px;border-radius:0 3px 3px 0">0 mm</div>
<svg class="abs" style="left:6px;top:132.5px" width="19" height="18" viewBox="0 0 19 18"><path d="M2 4v10M.5 5.500L2 3.500l1.500 2M.5 12.500L2 14.500l1.500-2" stroke="#222" fill="none" stroke-width=".9"/><text x="4" y="13" font-family="Liberation Sans" font-weight="bold" font-size="10" fill="#222">A</text><path d="M4 14.500h7" stroke="#222"/><rect x="12" y="4.0" width="6" height="1.200" fill="#222"/><rect x="12" y="6.4" width="6" height="1.200" fill="#222"/><rect x="12" y="8.8" width="6" height="1.200" fill="#222"/><rect x="12" y="11.2" width="6" height="1.200" fill="#222"/><rect x="12" y="13.6" width="6" height="1.200" fill="#222"/></svg>
<svg class="abs" style="left:27px;top:132.5px" width="15" height="18" viewBox="0 0 15 18" preserveAspectRatio="none"><rect x=".5" y=".5" width="14.500" height="17" fill="#fcfcfc" stroke="#b4b4b4"/><path d="M2 9h11" stroke="#6a6a6a" stroke-width="1.200"/><path d="M7.500 3.200l3 3.800h-6zM7.500 14.800l3-3.800h-6z" fill="#1c1c1c"/></svg>
<div class="fld pf" style="left:42px;top:132.5px;width:60px;height:18px;border-radius:0 3px 3px 0">0</div>
<svg class="abs" style="left:108px;top:132.5px" width="19" height="18" viewBox="0 0 19 18"><path d="M1 2h10M2.500 .5L1 2l1.500 1.500M9.500 .5L11 2 9.500 3.500" stroke="#222" fill="none" stroke-width=".9"/><text x="0" y="13" font-family="Liberation Sans" font-weight="bold" font-size="10" fill="#222">Aa</text><path d="M0 14.500h12" stroke="#222"/><rect x="13" y="4.0" width="5" height="1.200" fill="#222"/><rect x="13" y="6.4" width="5" height="1.200" fill="#222"/><rect x="13" y="8.8" width="5" height="1.200" fill="#222"/><rect x="13" y="11.2" width="5" height="1.200" fill="#222"/><rect x="13" y="13.6" width="5" height="1.200" fill="#222"/></svg>
<svg class="abs" style="left:129px;top:132.5px" width="15" height="18" viewBox="0 0 15 18" preserveAspectRatio="none"><rect x=".5" y=".5" width="14.500" height="17" fill="#fcfcfc" stroke="#b4b4b4"/><path d="M2 9h11" stroke="#6a6a6a" stroke-width="1.200"/><path d="M7.500 3.200l3 3.800h-6zM7.500 14.800l3-3.800h-6z" fill="#1c1c1c"/></svg>
<div class="fld pf" style="left:144px;top:132.5px;width:60px;height:18px;border-radius:0 3px 3px 0">0</div>
<div class="abs" style="left:9px;top:162.5px;width:12px;height:12px;background:linear-gradient(#fff,#dfe6f2);border:1px solid #6d7f9c;border-radius:2px"></div><svg class="abs" style="left:10px;top:158.5px" width="14" height="14" viewBox="0 0 14 14"><path d="M2 8l3 4 7-11" fill="none" stroke="#1a1a3a" stroke-width="2"/></svg>
<span class="abs" style="left:27px;top:161.5px;font-size:10px;line-height:14px;color:#111">Hyphenate</span>
<svg class="abs" style="left:143px;top:160px" width="48" height="16" viewBox="0 0 48 16"><rect x=".5" y=".5" width="23" height="15" fill="#8a8a8a" stroke="#707070"/><path d="M4 5.500h7M13 5.500h7M4 8.500h7M13 8.500h7M4 11.500h7M13 11.500h7" stroke="#222" stroke-width="1.300"/><path d="M31 5.500h7M40 5.500h7M31 8.500h7M40 8.500h7M31 11.500h7M40 11.500h7" stroke="#222" stroke-width="1.300"/></svg>
<div class="abs" style="left:2px;top:179.5px;width:273px;height:3px;background:#686868"></div>
<div class="abs" style="left:2px;top:182.5px;width:273px;height:16.200px;background:linear-gradient(#b0b0b0,#a4a4a4 30%,#969696)"></div>
<svg class="abs" style="left:257px;top:186.5px" width="14" height="8" viewBox="0 0 14 8"><path d="M0 2h5.500L2.750 5.500z" fill="#222"/><path d="M7 .8h7M7 2.900h7M7 5h7M7 7.100h7" stroke="#2a2a2a" stroke-width=".9"/></svg>
<div class="abs" style="left:2px;top:198.7px;width:273px;height:4.800px;background:linear-gradient(#7c7c7c 0 .6px,#d4d4d4 .6px 2px,#6a6a6a 2px)"></div>
<div class="abs" style="left:2px;top:203.8px;width:273px;height:16.200px;background:linear-gradient(#b0b0b0,#a4a4a4 30%,#969696)"></div>
<svg class="abs" style="left:257px;top:207.8px" width="14" height="8" viewBox="0 0 14 8"><path d="M0 2h5.500L2.750 5.500z" fill="#222"/><path d="M7 .8h7M7 2.900h7M7 5h7M7 7.100h7" stroke="#2a2a2a" stroke-width=".9"/></svg>
<div class="abs" style="left:2px;top:220.0px;width:273px;height:4.800px;background:linear-gradient(#7c7c7c 0 .6px,#d4d4d4 .6px 2px,#6a6a6a 2px)"></div>
<div class="abs" style="left:2px;top:225px;width:273px;height:16.200px;background:linear-gradient(#b0b0b0,#a4a4a4 30%,#969696)"></div>
<svg class="abs" style="left:257px;top:229px" width="14" height="8" viewBox="0 0 14 8"><path d="M0 2h5.500L2.750 5.500z" fill="#222"/><path d="M7 .8h7M7 2.900h7M7 5h7M7 7.100h7" stroke="#2a2a2a" stroke-width=".9"/></svg>
<div class="abs" style="left:2px;top:241.2px;width:273px;height:4.800px;background:linear-gradient(#7c7c7c 0 .6px,#d4d4d4 .6px 2px,#6a6a6a 2px)"></div>
<div class="abs" style="left:2px;top:246px;width:273px;height:16.200px;background:linear-gradient(#b0b0b0,#a4a4a4 30%,#969696)"></div>
<svg class="abs" style="left:257px;top:250px" width="14" height="8" viewBox="0 0 14 8"><path d="M0 2h5.500L2.750 5.500z" fill="#222"/><path d="M7 .8h7M7 2.900h7M7 5h7M7 7.100h7" stroke="#2a2a2a" stroke-width=".9"/></svg>
<div class="abs" style="left:2px;top:262.2px;width:273px;height:4.800px;background:linear-gradient(#7c7c7c 0 .6px,#d4d4d4 .6px 2px,#6a6a6a 2px)"></div>
<div class="abs" style="left:2px;top:267px;width:273px;height:16.200px;background:linear-gradient(#b0b0b0,#a4a4a4 30%,#969696)"></div>
<svg class="abs" style="left:257px;top:271px" width="14" height="8" viewBox="0 0 14 8"><path d="M0 2h5.500L2.750 5.500z" fill="#222"/><path d="M7 .8h7M7 2.900h7M7 5h7M7 7.100h7" stroke="#2a2a2a" stroke-width=".9"/></svg>
<div class="abs" style="left:2px;top:283.2px;width:273px;height:4.800px;background:linear-gradient(#7c7c7c 0 .6px,#d4d4d4 .6px 2px,#6a6a6a 2px)"></div>
<div class="abs" style="left:2px;top:288px;width:273px;height:16.200px;background:linear-gradient(#b0b0b0,#a4a4a4 30%,#969696)"></div>
<svg class="abs" style="left:257px;top:292px" width="14" height="8" viewBox="0 0 14 8"><path d="M0 2h5.500L2.750 5.500z" fill="#222"/><path d="M7 .8h7M7 2.900h7M7 5h7M7 7.100h7" stroke="#2a2a2a" stroke-width=".9"/></svg>
<div class="abs" style="left:2px;top:304.2px;width:273px;height:4.800px;background:linear-gradient(#7c7c7c 0 .6px,#d4d4d4 .6px 2px,#6a6a6a 2px)"></div>
<div class="abs" style="left:2px;top:308px;width:273px;height:230px;background:#ebebeb"></div>
<div class="abs" style="left:4px;top:308px;width:271px;height:161px;background:#efefef;border:1px solid #777;border-top:0"></div>
<div class="abs" style="left:261px;top:308px;width:14px;height:160px;background:#fcfcfc;border-left:1px solid #e2e2e2"></div>
<div class="abs" style="left:5px;top:328.5px;width:256px;height:1.500px;background:#fbfbfb"></div>
<div class="abs" style="left:5px;top:348.5px;width:256px;height:1.500px;background:#fbfbfb"></div>
<div class="abs" style="left:5px;top:369.5px;width:256px;height:1.500px;background:#fbfbfb"></div>
<div class="abs" style="left:245px;top:334.5px;width:9px;height:9px;background:#c80f1c;border:1px solid #3a0808"></div>
<div class="abs" style="left:245px;top:355px;width:9px;height:9px;background:#5c92dc;border:1px solid #1c3a6a"></div>
<span class="abs" style="left:5.5px;top:476.5px;font-size:10px;line-height:14px;color:#111;letter-spacing:-.15px">Indicators:</span>
<div class="pop" style="left:57.5px;top:474px;width:200px;height:14px;line-height:12px;font-size:10px;padding-left:5px;border-radius:3px">Show<i class="ud" style="top:-1.500px;transform:scale(.8)"></i></div>
<div class="abs" style="left:6px;top:494.5px;width:269px;height:1px;background:#8c8c8c;box-shadow:0 1px 0 #fafafa"></div>
<span class="abs" style="left:35px;top:502.5px;font-size:10px;line-height:14px;color:#111">Set:</span>
<div class="pop" style="left:57.5px;top:500px;width:200px;height:14px;line-height:12px;font-size:10px;padding-left:5px;border-radius:3px">[None]<i class="ud" style="top:-1.500px;transform:scale(.8)"></i></div>
<div class="abs" style="left:6px;top:520px;width:269px;height:1px;background:#8c8c8c;box-shadow:0 1px 0 #fafafa"></div>
<span class="abs" style="left:6.5px;top:523.5px;font-size:10px;line-height:14px;color:#111;white-space:pre;letter-spacing:.03px">2 conditions applied  [mixed]</span>
<div class="abs" style="left:200px;top:522.5px;width:30px;height:14px;background:linear-gradient(90deg,#6e6e6e,#9a9a9a 50%,#6e6e6e);border:1px solid #666"></div><svg class="abs" style="left:209px;top:524px" width="12" height="11" viewBox="0 0 12 11"><path d="M3 1.500h7v8H3z" fill="#f4f4f4" stroke="#222" stroke-width=".9"/><path d="M1 6h4v4H1z" fill="#dfe8f6" stroke="#222" stroke-width=".8"/></svg>
<svg class="abs" style="left:240px;top:523px" width="11" height="13" viewBox="0 0 11 13"><path d="M1.500 3.500h8l-1 9h-6z" fill="#d0d0d0" stroke="#777" stroke-width=".9"/><path d="M.5 3h10M4 1.500h3" stroke="#777" stroke-width="1.200"/><path d="M4 5.500v5M5.500 5.500v5M7 5.500v5" stroke="#888" stroke-width=".7"/></svg>
<div class="abs" style="left:2px;top:538px;width:273px;height:3px;background:#646464"></div>
<div class="abs" style="left:2px;top:541px;width:273px;height:17px;background:linear-gradient(#ababab,#9b9b9b)"></div>
<div class="abs" style="left:2px;top:541px;width:40px;height:18px;background:#e9e9e9;font-size:11px;font-weight:bold;line-height:17px;color:#222;padding-left:7px;letter-spacing:-.2px">Story</div>
<div class="abs" style="left:2px;top:558px;width:273px;height:49px;background:#ebebeb"></div>
<div class="abs" style="left:7.5px;top:564.5px;width:11.500px;height:11.500px;background:linear-gradient(#fff,#eee);border:1px solid #8a8a8a;border-radius:2.500px"></div>
<span class="abs" style="left:25px;top:563px;font-size:10px;line-height:14px;color:#111;letter-spacing:.02px">Optical Margin Alignment</span>
<svg class="abs" style="left:6px;top:584px" width="17" height="16" viewBox="0 0 17 16"><path d="M4.500 3.500H1.500v9h3M3 1.500l2 2-2 2M3 10.500l2 2-2 2" fill="none" stroke="#222" stroke-width="1.200"/><path d="M7 2h9M7 4.500h9M7 7h9M7 9.500h9M7 12h9M7 14.500h6" stroke="#222" stroke-width="1.100"/></svg>
<svg class="abs" style="left:27px;top:584px" width="15" height="16" viewBox="0 0 15 18" preserveAspectRatio="none"><rect x=".5" y=".5" width="14.500" height="17" fill="#fcfcfc" stroke="#b4b4b4"/><path d="M2 9h11" stroke="#9a9a9a" stroke-width="1"/><path d="M7.500 3.200l3 3.800h-6zM7.500 14.800l3-3.800h-6z" fill="#6a6a6a"/></svg>
<div class="fld pf" style="left:41px;top:584px;width:57px;height:16px;line-height:14px;border-radius:0 3px 3px 0;color:#3a3a3a;border-color:#c4c4c4">12 pt<i class="dd" style="height:14px;opacity:.6"></i></div>
<div class="abs" style="left:2px;top:606.5px;width:273px;height:1px;background:#8a8a8a"></div><div class="abs" style="left:2px;top:607.5px;width:273px;height:5px;background:#e2e2e2"></div>
<div class="abs" style="left:2px;top:612.5px;width:354px;height:2px;background:#8c8c8c"></div>
<div class="abs" style="left:275px;top:11px;width:3px;height:606px;background:#686868"></div>
<div class="abs" style="left:278px;top:13px;width:37px;height:600px;background:#ebebeb"></div>
<div class="abs" style="left:315px;top:11px;width:3px;height:606px;background:#686868"></div>
<div class="abs" style="left:318px;top:13px;width:38px;height:600px;background:#ebebeb"></div>
<div class="abs" style="left:286.5px;top:17px;width:20px;height:3px;background:repeating-linear-gradient(90deg,#8a8a8a 0 1px,transparent 1px 2px)"></div>
<div class="abs" style="left:286.5px;top:58px;width:20px;height:3px;background:repeating-linear-gradient(90deg,#8a8a8a 0 1px,transparent 1px 2px)"></div>
<div class="abs" style="left:278px;top:52.5px;width:37px;height:1.500px;background:#7c7c7c"></div>
<div class="abs" style="left:278px;top:93px;width:37px;height:1.500px;background:#7c7c7c"></div>
<div class="abs" style="left:327px;top:17px;width:20px;height:3px;background:repeating-linear-gradient(90deg,#8a8a8a 0 1px,transparent 1px 2px)"></div>
<div class="abs" style="left:327px;top:58px;width:20px;height:3px;background:repeating-linear-gradient(90deg,#8a8a8a 0 1px,transparent 1px 2px)"></div>
<div class="abs" style="left:327px;top:99px;width:20px;height:3px;background:repeating-linear-gradient(90deg,#8a8a8a 0 1px,transparent 1px 2px)"></div>
<div class="abs" style="left:327px;top:140.5px;width:20px;height:3px;background:repeating-linear-gradient(90deg,#8a8a8a 0 1px,transparent 1px 2px)"></div>
<div class="abs" style="left:327px;top:209.5px;width:20px;height:3px;background:repeating-linear-gradient(90deg,#8a8a8a 0 1px,transparent 1px 2px)"></div>
<div class="abs" style="left:327px;top:251.5px;width:20px;height:3px;background:repeating-linear-gradient(90deg,#8a8a8a 0 1px,transparent 1px 2px)"></div>
<div class="abs" style="left:327px;top:292px;width:20px;height:3px;background:repeating-linear-gradient(90deg,#8a8a8a 0 1px,transparent 1px 2px)"></div>
<div class="abs" style="left:318px;top:52.5px;width:38px;height:1.500px;background:#7c7c7c"></div>
<div class="abs" style="left:318px;top:93px;width:38px;height:1.500px;background:#7c7c7c"></div>
<div class="abs" style="left:318px;top:134.5px;width:38px;height:1.500px;background:#7c7c7c"></div>
<div class="abs" style="left:318px;top:203.5px;width:38px;height:1.500px;background:#7c7c7c"></div>
<div class="abs" style="left:318px;top:244px;width:38px;height:1.500px;background:#7c7c7c"></div>
<div class="abs" style="left:318px;top:285.5px;width:38px;height:1.500px;background:#7c7c7c"></div>
<div class="abs" style="left:318px;top:325.5px;width:38px;height:1.500px;background:#7c7c7c"></div>
<svg class="abs" style="left:286.5px;top:28px" width="20" height="18" viewBox="0 0 20 18"><path d="M10 7.500l9 4.500-9 4.500-9-4.500z" fill="#262626"/><path d="M10 1l9 4.500-9 4.500-9-4.500z" fill="#f2f2f2" stroke="#262626" stroke-width="1.100" stroke-linejoin="round"/></svg>
<svg class="abs" style="left:287.5px;top:68px" width="18" height="19" viewBox="0 0 18 19"><path d="M1.500 6.500L4.500 3.500h9l3 3v9h-15z" fill="#f4f4f4" stroke="#262626" stroke-width="1.200" stroke-linejoin="round"/><path d="M9 1v17" stroke="#262626" stroke-width="1.200"/></svg>
<svg class="abs" style="left:327px;top:28px" width="20" height="18" viewBox="0 0 20 18"><g fill="none" stroke="#262626" stroke-width="1.700"><ellipse cx="5.500" cy="5" rx="3.500" ry="2.800" transform="rotate(35 5.500 5)"/><ellipse cx="10" cy="9" rx="3.500" ry="2.500" transform="rotate(35 10 9)"/><ellipse cx="14.500" cy="12.500" rx="3.500" ry="2.800" transform="rotate(35 14.500 12.500)"/></g></svg>
<svg class="abs" style="left:328px;top:70px" width="18" height="15" viewBox="0 0 18 15"><path d="M0 1.500h18" stroke="#262626" stroke-width="1" stroke-dasharray="2 1"/><path d="M0 5h18" stroke="#262626" stroke-width="1.600"/><path d="M0 8.500h18" stroke="#262626" stroke-width="2.200"/><path d="M0 12.500h18" stroke="#262626" stroke-width="3"/></svg>
<svg class="abs" style="left:328px;top:110px" width="19" height="18" viewBox="0 0 19 18"><rect x="5.500" y="1.500" width="12" height="12" fill="#f6f6f6" stroke="#444" stroke-dasharray="1.500 1"/><rect x="1.500" y="8.500" width="8" height="8" fill="#cfcfcf" stroke="#262626"/><rect x="4.500" y="11.500" width="5" height="5" fill="#8a8a8a" stroke="#262626" stroke-width=".8"/></svg>
<svg class="abs" style="left:329px;top:150px" width="17" height="17" viewBox="0 0 17 17"><path d="M1 0v17" stroke="#262626" stroke-width="1.400"/><rect x="3" y="2" width="9" height="5" fill="#777"/><rect x="3" y="9" width="13" height="6" fill="#262626"/></svg>
<svg class="abs" style="left:329px;top:179px" width="17" height="17" viewBox="0 0 17 17"><rect x="1" y="1" width="9" height="9" fill="#8a8a8a"/><rect x="6" y="6" width="10" height="10" fill="#262626"/><rect x="6" y="6" width="4" height="4" fill="#555"/></svg>
<span class="abs" style="left:329px;top:218px;font-family:'Liberation Serif',serif;font-style:italic;font-weight:bold;font-size:17px;line-height:20px;color:#262626;letter-spacing:-.5px">fx</span>
<svg class="abs" style="left:327px;top:259px" width="20" height="20" viewBox="0 0 20 20"><path d="M14.0 10.0L19.0 10.0" stroke="#333" stroke-width="1.500" opacity="0.25"/><path d="M13.5 12.0L17.8 14.5" stroke="#333" stroke-width="1.500" opacity="0.32"/><path d="M12.0 13.5L14.5 17.8" stroke="#333" stroke-width="1.500" opacity="0.39"/><path d="M10.0 14.0L10.0 19.0" stroke="#333" stroke-width="1.500" opacity="0.45"/><path d="M8.0 13.5L5.5 17.8" stroke="#333" stroke-width="1.500" opacity="0.52"/><path d="M6.5 12.0L2.2 14.5" stroke="#333" stroke-width="1.500" opacity="0.59"/><path d="M6.0 10.0L1.0 10.0" stroke="#333" stroke-width="1.500" opacity="0.66"/><path d="M6.5 8.0L2.2 5.5" stroke="#333" stroke-width="1.500" opacity="0.73"/><path d="M8.0 6.5L5.5 2.2" stroke="#333" stroke-width="1.500" opacity="0.80"/><path d="M10.0 6.0L10.0 1.0" stroke="#333" stroke-width="1.500" opacity="0.86"/><path d="M12.0 6.5L14.5 2.2" stroke="#333" stroke-width="1.500" opacity="0.93"/><path d="M13.5 8.0L17.8 5.5" stroke="#333" stroke-width="1.500" opacity="1.00"/></svg>
<svg class="abs" style="left:328.5px;top:303px" width="18" height="15" viewBox="0 0 18 15"><rect x="0" y="0" width="17.500" height="14.500" fill="#222"/><rect x="1" y="1.0" width="3.400" height="3.600" fill="#333"/><rect x="5" y="1.0" width="3.400" height="3.600" fill="#666"/><rect x="9" y="1.0" width="3.400" height="3.600" fill="#999"/><rect x="13" y="1.0" width="3.400" height="3.600" fill="#333"/><rect x="1" y="5.3" width="3.400" height="3.600" fill="#666"/><rect x="5" y="5.3" width="3.400" height="3.600" fill="#999"/><rect x="9" y="5.3" width="3.400" height="3.600" fill="#333"/><rect x="13" y="5.3" width="3.400" height="3.600" fill="#666"/><rect x="1" y="9.6" width="3.400" height="3.600" fill="#999"/><rect x="5" y="9.6" width="3.400" height="3.600" fill="#333"/><rect x="9" y="9.6" width="3.400" height="3.600" fill="#666"/><rect x="13" y="9.6" width="3.400" height="3.600" fill="#999"/></svg>
</div>
<div id="dialog" class="abs">
<div class="abs" style="left:0;top:0;width:346px;height:22px;background:linear-gradient(#e3e3e3,#cfcfcf 50%,#b8b8b8);border-radius:4px 4px 0 0;border-bottom:1px solid #7e7e7e;box-shadow:inset 0 1px 0 #f6f6f6"></div>
<div class="abs" style="left:0;top:2px;width:346px;text-align:center;font-size:14px;line-height:18px;color:#2e2e2e;letter-spacing:.08px;text-shadow:0 1px 0 rgba(255,255,255,.6)">New Condition</div>
<span class="abs dl" style="right:275.70000000000005px;top:54.5px;letter-spacing:-0.06px">Name:</span>
<div class="abs" style="left:76px;top:51.5px;width:230px;height:20.500px;background:#fff;border:1px solid #a2a2a2;border-top-color:#8a8a8a;box-shadow:inset 0 1px 1px rgba(0,0,0,.12)"></div>
<span class="abs dl" style="left:78.29999999999995px;top:54.3px">Small cafe</span>
<div class="abs" style="left:142px;top:54.5px;width:1px;height:15px;background:#111"></div>
<div class="abs" style="left:15px;top:97.5px;width:305px;height:108px;border:1px solid #a4a4a4;box-shadow:inset 1px 1px 0 rgba(255,255,255,.7),1px 1px 0 rgba(255,255,255,.7)"></div>
<span class="abs dl" style="left:26px;top:89.4px;background:#ececec;padding:0 5px 0 4px;letter-spacing:.41px">Indicator</span>
<span class="abs dl" style="right:238.5px;top:114.7px;letter-spacing:0.17px">Method:</span>
<div class="dpop" style="left:114.5px;top:113px"><span style="position:absolute;left:8.500px;top:0;letter-spacing:0.24px">Underline</span><svg style="position:absolute;right:6px;top:3.500px" width="7" height="12" viewBox="0 0 7 12"><path d="M3.500 0L6.500 4.500h-6zM3.500 12L6.500 7.500h-6z" fill="#333"/></svg></div>
<span class="abs dl" style="right:238.5px;top:144.4px;letter-spacing:0.04px">Appearance:</span>
<div class="dpop" style="left:114.5px;top:142.8px"><span style="position:absolute;left:8.500px;top:0;letter-spacing:-0.06px">Wavy</span><svg style="position:absolute;right:6px;top:3.500px" width="7" height="12" viewBox="0 0 7 12"><path d="M3.500 0L6.500 4.500h-6zM3.500 12L6.500 7.500h-6z" fill="#333"/></svg></div>
<span class="abs dl" style="right:238.5px;top:174.3px;letter-spacing:0.49px">Colour:</span>
<div class="dpop" style="left:114.5px;top:172.60000000000002px"><i style="position:absolute;left:6px;top:3.500px;width:11.500px;height:11.500px;background:#54f04a;border:1px solid #2a7a26"></i><span style="position:absolute;left:22px;top:0;letter-spacing:0.09px">Green</span><svg style="position:absolute;right:6px;top:3.500px" width="7" height="12" viewBox="0 0 7 12"><path d="M3.500 0L6.500 4.500h-6zM3.500 12L6.500 7.500h-6z" fill="#333"/></svg></div>
<div class="dbtn" style="left:121px;top:217.5px">Cancel</div>
<div class="dbtn ok" style="left:221px;top:217.5px;letter-spacing:-.3px">OK</div>
</div>
<div class="abs" style="left:0;top:716px;width:1280px;height:4px;background:#9e9e9e"></div>
<div class="abs" style="left:1122px;top:716px;width:47px;height:4px;background:#8a8a8a"></div>
<div class="abs" style="left:1169px;top:716px;width:111px;height:4px;background:#dcdcdc;overflow:hidden"><span style="position:absolute;left:16px;top:1px;font-size:11px;font-weight:bold;line-height:11px;color:#6a6a6a;letter-spacing:.6px">DEVICES</span></div>
</div>
</body>
</html>
